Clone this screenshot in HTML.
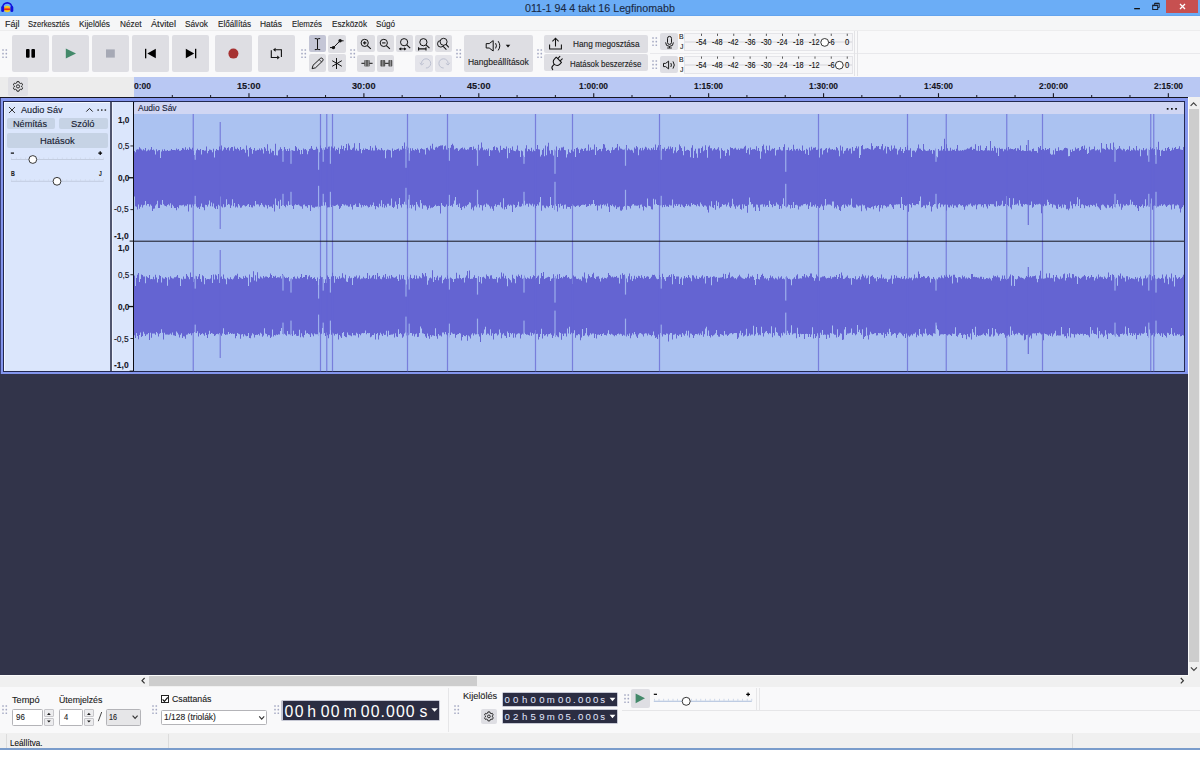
<!DOCTYPE html>
<html lang="hu">
<head>
<meta charset="utf-8">
<title>011-1 94 4 takt 16 Legfinomabb</title>
<style>
html,body{margin:0;padding:0;}
body{width:1200px;height:759px;overflow:hidden;background:#fff;position:relative;
 font-family:"Liberation Sans",sans-serif;color:#1a1a1a;font-size:9px;}
.abs{position:absolute;}
.t{position:absolute;white-space:nowrap;line-height:1.15;-webkit-text-stroke:.12px currentColor;}
.btn{position:absolute;background:#dedee3;border-radius:2px;}
svg{overflow:visible;}
</style>
</head>
<body>
<!-- s_title -->
<div class="abs" style="left:0px;top:0px;width:1200px;height:16px;background:#6badf6;"></div>
<div class="abs" style="left:0px;top:15px;width:1200px;height:1px;background:#63a4ee;"></div>
<svg class="abs" style="left:0;top:0" width="16" height="16" viewBox="0 0 16 16">
 <circle cx="7.2" cy="9" r="3.2" fill="#f7d21a"/>
 <rect x="4" y="7.6" width="6.4" height="3" fill="#f59a1a"/>
 <rect x="3.9" y="8.5" width="6.6" height="1.5" rx=".7" fill="#ee2418"/>
 <circle cx="7.2" cy="9" r="3.2" fill="none" stroke="#6badf6" stroke-width=".1"/>
 <path d="M2.7 8.6V7.4a4.55 4.55 0 0 1 9.1 0v1.2" fill="none" stroke="#1212dc" stroke-width="1.6"/>
 <rect x="1.2" y="6" width="2.9" height="6.1" rx="1.4" fill="#1212dc"/>
 <rect x="10.4" y="6" width="2.9" height="6.1" rx="1.4" fill="#1212dc"/>
</svg>
<div class="t" style="left:525.00px;top:2.20px;font-size:11.4px;color:#1a2a44;transform:scaleX(0.9368);transform-origin:0 0;">011-1 94 4 takt 16 Legfinomabb</div>
<div class="abs" style="left:1166px;top:0px;width:32px;height:13px;background:#c75050;"></div>
<svg class="abs" style="left:1130px;top:0" width="70" height="16" viewBox="0 0 70 16">
 <rect x="4.2" y="8" width="5.7" height="1.3" fill="#111"/>
 <rect x="22.7" y="5.2" width="5" height="4.3" fill="none" stroke="#1a1f2a" stroke-width="1"/><rect x="22.7" y="4.9" width="5" height="1.2" fill="#1a1f2a"/>
 <path d="M24.6 4.8V3.3h4.6v4.3h-1.4" fill="none" stroke="#1a1f2a" stroke-width="1"/><rect x="24.6" y="2.9" width="4.6" height="1.1" fill="#1a1f2a"/>
 <path d="M50 4l5 5M55 4l-5 5" stroke="#fff" stroke-width="1.3" fill="none"/>
</svg>
<div class="abs" style="left:0px;top:16px;width:1200px;height:14px;background:#f5f6f7;"></div>
<div class="t" style="left:5.00px;top:18.90px;font-size:9.3px;color:#1c1c1c;transform:scaleX(0.9677);transform-origin:0 0;">Fájl</div>
<div class="t" style="left:28.00px;top:18.90px;font-size:9.3px;color:#1c1c1c;transform:scaleX(0.8194);transform-origin:0 0;">Szerkesztés</div>
<div class="t" style="left:79.00px;top:18.90px;font-size:9.3px;color:#1c1c1c;transform:scaleX(0.8951);transform-origin:0 0;">Kijelölés</div>
<div class="t" style="left:120.00px;top:18.90px;font-size:9.3px;color:#1c1c1c;transform:scaleX(0.8850);transform-origin:0 0;">Nézet</div>
<div class="t" style="left:151.00px;top:18.90px;font-size:9.3px;color:#1c1c1c;transform:scaleX(0.9872);transform-origin:0 0;">Átvitel</div>
<div class="t" style="left:185.00px;top:18.90px;font-size:9.3px;color:#1c1c1c;transform:scaleX(0.8899);transform-origin:0 0;">Sávok</div>
<div class="t" style="left:218.00px;top:18.90px;font-size:9.3px;color:#1c1c1c;transform:scaleX(0.8745);transform-origin:0 0;">Előállítás</div>
<div class="t" style="left:260.00px;top:18.90px;font-size:9.3px;color:#1c1c1c;transform:scaleX(0.9056);transform-origin:0 0;">Hatás</div>
<div class="t" style="left:292.00px;top:18.90px;font-size:9.3px;color:#1c1c1c;transform:scaleX(0.8413);transform-origin:0 0;">Elemzés</div>
<div class="t" style="left:332.00px;top:18.90px;font-size:9.3px;color:#1c1c1c;transform:scaleX(0.8795);transform-origin:0 0;">Eszközök</div>
<div class="t" style="left:376.00px;top:18.90px;font-size:9.3px;color:#1c1c1c;transform:scaleX(0.8748);transform-origin:0 0;">Súgó</div>
<!-- s_toolbar -->
<div class="abs" style="left:0px;top:30px;width:1200px;height:47px;background:#f9f9fa;"></div>
<div class="abs" style="left:0px;top:29.5px;width:1200px;height:1px;background:#ededee;"></div>
<div class="abs" style="left:650px;top:53px;width:550px;height:1px;background:#e9e9ec;"></div>
<div class="abs" style="left:853.5px;top:31px;width:1px;height:45px;background:#e3e3e6;"></div>
<div class="abs" style="left:856.8px;top:31px;width:1px;height:45px;background:#e3e3e6;"></div>
<svg class="abs" style="left:2.2px;top:48.5px" width="6" height="11.8" viewBox="0 0 6 11.8"><rect x="0.2" y="0.2" width="1.6" height="1.6" rx=".4" fill="#a4a8c2"/><rect x="3.5" y="0.2" width="1.6" height="1.6" rx=".4" fill="#a4a8c2"/><rect x="0.2" y="3.8" width="1.6" height="1.6" rx=".4" fill="#a4a8c2"/><rect x="3.5" y="3.8" width="1.6" height="1.6" rx=".4" fill="#a4a8c2"/><rect x="0.2" y="7.4" width="1.6" height="1.6" rx=".4" fill="#a4a8c2"/><rect x="3.5" y="7.4" width="1.6" height="1.6" rx=".4" fill="#a4a8c2"/></svg>
<div class="btn" style="left:12px;top:35px;width:37px;height:37px;background:#dedee3;border-radius:2px"></div>
<div class="btn" style="left:52px;top:35px;width:37px;height:37px;background:#dedee3;border-radius:2px"></div>
<div class="btn" style="left:92px;top:35px;width:37px;height:37px;background:#dedee3;border-radius:2px"></div>
<div class="btn" style="left:132px;top:35px;width:37px;height:37px;background:#dedee3;border-radius:2px"></div>
<div class="btn" style="left:172px;top:35px;width:37px;height:37px;background:#dedee3;border-radius:2px"></div>
<div class="btn" style="left:215px;top:35px;width:37px;height:37px;background:#dedee3;border-radius:2px"></div>
<div class="btn" style="left:258px;top:35px;width:37px;height:37px;background:#dedee3;border-radius:2px"></div>
<svg class="abs" style="left:0px;top:0px" width="300" height="80" viewBox="0 0 300 80"><rect x="26" y="49" width="3.6" height="8.8" rx="1" fill="#000"/><rect x="31.4" y="49" width="3.6" height="8.8" rx="1" fill="#000"/><path d="M65.8 48.4L76 53.5L65.8 58.6Z" fill="#43896a"/><rect x="106" y="49.4" width="8.8" height="8.2" fill="#a6a9b5"/><rect x="145" y="48.8" width="1.3" height="9.5" fill="#000"/><path d="M147.3 53.5L155.8 48.8V58.3Z" fill="#000"/><rect x="195" y="48.8" width="1.3" height="9.5" fill="#000"/><path d="M194.2 53.5L185.8 48.8V58.3Z" fill="#000"/><circle cx="233.4" cy="53.6" r="5" fill="#a63232"/><g fill="none" stroke="#111" stroke-width="1.1" stroke-linejoin="miter"><path d="M281.4 56.9V49.7H275.2"/><path d="M271.3 50.2V57.5H277.6"/></g><path d="M273 49.7l2.6-2v4z M279.8 57.5l-2.6-2v4z" fill="#111"/></svg>
<svg class="abs" style="left:301.2px;top:48.5px" width="6" height="11.8" viewBox="0 0 6 11.8"><rect x="0.2" y="0.2" width="1.6" height="1.6" rx=".4" fill="#a4a8c2"/><rect x="3.5" y="0.2" width="1.6" height="1.6" rx=".4" fill="#a4a8c2"/><rect x="0.2" y="3.8" width="1.6" height="1.6" rx=".4" fill="#a4a8c2"/><rect x="3.5" y="3.8" width="1.6" height="1.6" rx=".4" fill="#a4a8c2"/><rect x="0.2" y="7.4" width="1.6" height="1.6" rx=".4" fill="#a4a8c2"/><rect x="3.5" y="7.4" width="1.6" height="1.6" rx=".4" fill="#a4a8c2"/></svg>
<div class="btn" style="left:308.7px;top:35px;width:17.4px;height:17.4px;background:#c4c6d6;border-radius:2px"></div>
<div class="btn" style="left:328px;top:35px;width:17.6px;height:17.6px;background:#dedee3;border-radius:2px"></div>
<div class="btn" style="left:308.7px;top:54.2px;width:17.6px;height:17.6px;background:#dedee3;border-radius:2px"></div>
<div class="btn" style="left:328px;top:54.2px;width:17.6px;height:17.6px;background:#dedee3;border-radius:2px"></div>
<svg class="abs" style="left:0px;top:0px" width="360" height="80" viewBox="0 0 360 80"><path d="M317.5 38.8V49.4M314.8 38.6h1.4q1.3 0 1.3 1.2 0-1.2 1.3-1.2h1.4M314.8 49.6h1.4q1.3 0 1.3-1.2 0 1.2 1.3 1.2h1.4" fill="none" stroke="#111" stroke-width="1"/><path d="M330 47.6h3.4L340.1 40.8h3.5" fill="none" stroke="#111" stroke-width="1"/><circle cx="333.4" cy="47.6" r="1.7" fill="#111"/><circle cx="340.1" cy="40.8" r="1.7" fill="#111"/><path d="M312.1 68.7l.9-3.4 7.4-6.9q1.2-.8 2.2.2t.2 2.2l-7.3 7z" fill="none" stroke="#111" stroke-width=".95" stroke-linejoin="round"/><path d="M319.2 59.6l2.5 2.5" stroke="#111" stroke-width=".8"/><path d="M336.5 58v11M332.2 60.7l9.6 5.6M341.8 60.7l-9.6 5.6" stroke="#111" stroke-width="1"/></svg>
<svg class="abs" style="left:350.2px;top:48.5px" width="6" height="11.8" viewBox="0 0 6 11.8"><rect x="0.2" y="0.2" width="1.6" height="1.6" rx=".4" fill="#a4a8c2"/><rect x="3.5" y="0.2" width="1.6" height="1.6" rx=".4" fill="#a4a8c2"/><rect x="0.2" y="3.8" width="1.6" height="1.6" rx=".4" fill="#a4a8c2"/><rect x="3.5" y="3.8" width="1.6" height="1.6" rx=".4" fill="#a4a8c2"/><rect x="0.2" y="7.4" width="1.6" height="1.6" rx=".4" fill="#a4a8c2"/><rect x="3.5" y="7.4" width="1.6" height="1.6" rx=".4" fill="#a4a8c2"/></svg>
<div class="btn" style="left:357.3px;top:35.2px;width:17.3px;height:17.2px;background:#dedee3;border-radius:2px"></div>
<div class="btn" style="left:376.6px;top:35.2px;width:17.3px;height:17.2px;background:#dedee3;border-radius:2px"></div>
<div class="btn" style="left:396px;top:35.2px;width:17.3px;height:17.2px;background:#dedee3;border-radius:2px"></div>
<div class="btn" style="left:415.3px;top:35.2px;width:17.3px;height:17.2px;background:#dedee3;border-radius:2px"></div>
<div class="btn" style="left:434.5px;top:35.2px;width:17.3px;height:17.2px;background:#dedee3;border-radius:2px"></div>
<div class="btn" style="left:357.3px;top:54.5px;width:17.3px;height:17.1px;background:#dedee3;border-radius:2px"></div>
<div class="btn" style="left:376.6px;top:54.5px;width:17.3px;height:17.1px;background:#dedee3;border-radius:2px"></div>
<div class="btn" style="left:415.3px;top:54.5px;width:17.3px;height:17.1px;background:#e4e4ea;border-radius:2px"></div>
<div class="btn" style="left:434.5px;top:54.5px;width:17.3px;height:17.1px;background:#e4e4ea;border-radius:2px"></div>
<svg class="abs" style="left:0px;top:0px" width="470" height="80" viewBox="0 0 470 80"><circle cx="364.7" cy="42.9" r="3.6" stroke="#111" fill="none" stroke-width="1"/><path d="M367.3 45.6l3.5 3.3" stroke="#111" fill="none" stroke-width="1.1"/><path d="M363 42.9h3.4M364.7 41.2v3.4" stroke="#111" fill="none" stroke-width="1.1"/><circle cx="383.8" cy="42.9" r="3.6" stroke="#111" fill="none" stroke-width="1"/><path d="M386.4 45.6l3.5 3.3" stroke="#111" fill="none" stroke-width="1.1"/><path d="M382.1 42.9h3.4" stroke="#111" fill="none" stroke-width="1.1"/><circle cx="404.1" cy="42.2" r="3.6" stroke="#111" fill="none" stroke-width="1"/><path d="M406.7 44.9l3.5 3.3" stroke="#111" fill="none" stroke-width="1.1"/><path d="M399.6 48.9h6" stroke="#111" fill="none" stroke-width="1"/><path d="M398.8 48.9l2.4-1.7v3.4zM406.4 48.9l-2.4-1.7v3.4z" fill="#111"/><circle cx="423.4" cy="42.2" r="3.6" stroke="#111" fill="none" stroke-width="1"/><path d="M426 44.9l3.5 3.3" stroke="#111" fill="none" stroke-width="1.1"/><path d="M418.6 48.9h7.4M418.6 47.2v3.4M426 47.2v3.4" stroke="#111" fill="none" stroke-width="1.1"/><circle cx="440.8" cy="43.8" r="3.3" stroke="#111" fill="none" stroke-width=".95"/><circle cx="443.6" cy="41.8" r="3.5" stroke="#111" fill="#dedee3" stroke-width=".95"/><path d="M446.1 44.4l2.7 2.9M443.2 46.3l3.2 3.3" stroke="#111" fill="none" stroke-width="1.05"/><path d="M361.4 63.3h11.2" stroke="#111" fill="none" stroke-width="1"/><rect x="364.3" y="60" width="5.4" height="6.6" rx=".8" fill="#555"/><path d="M365.7 60v6.6M368.3 60v6.6" stroke="#dedee3" stroke-width=".5"/><path d="M385 63.3h4" stroke="#111" fill="none" stroke-width="1"/><rect x="380.4" y="60" width="4.8" height="6.6" rx=".8" fill="#555"/><rect x="388.4" y="60" width="3.9" height="6.6" rx=".8" fill="#555"/><path d="M382.8 60v6.6M390.4 60v6.6" stroke="#dedee3" stroke-width=".5"/><path d="M421.5 63.6a4.6 4.6 0 1 1 4.4 4.4" stroke="#bcc0d0" fill="none" stroke-width="1"/><path d="M419.9 62.8l1.6 2.2 2.2-1.6" stroke="#bcc0d0" fill="none" stroke-width="1"/><path d="M448.1 63.6a4.6 4.6 0 1 0 -4.4 4.4" stroke="#bcc0d0" fill="none" stroke-width="1"/><path d="M449.7 62.8l-1.6 2.2-2.2-1.6" stroke="#bcc0d0" fill="none" stroke-width="1"/></svg>
<svg class="abs" style="left:456.3px;top:48.5px" width="6" height="11.8" viewBox="0 0 6 11.8"><rect x="0.2" y="0.2" width="1.6" height="1.6" rx=".4" fill="#a4a8c2"/><rect x="3.5" y="0.2" width="1.6" height="1.6" rx=".4" fill="#a4a8c2"/><rect x="0.2" y="3.8" width="1.6" height="1.6" rx=".4" fill="#a4a8c2"/><rect x="3.5" y="3.8" width="1.6" height="1.6" rx=".4" fill="#a4a8c2"/><rect x="0.2" y="7.4" width="1.6" height="1.6" rx=".4" fill="#a4a8c2"/><rect x="3.5" y="7.4" width="1.6" height="1.6" rx=".4" fill="#a4a8c2"/></svg>
<div class="btn" style="left:463.8px;top:35px;width:69.2px;height:37px;background:#dedee3;border-radius:2px"></div>
<svg class="abs" style="left:0px;top:0px" width="540" height="80" viewBox="0 0 540 80"><path d="M486.2 43.6h3l4-3v10.4l-4-3h-3z" fill="none" stroke="#111" stroke-width="1" stroke-linejoin="round"/><path d="M495.6 43.2q1.7 2.6 0 5.2M498.2 41.2q3.2 4.6 0 9.2" fill="none" stroke="#111" stroke-width="1"/><path d="M505.7 44.8l2.3 2.8 2.3-2.8z" fill="#111"/></svg>
<div class="t" style="left:468.00px;top:56.60px;font-size:9.3px;color:#1c1c1c;transform:scaleX(0.9117);transform-origin:0 0;">Hangbeállítások</div>
<svg class="abs" style="left:537.3px;top:48.5px" width="6" height="11.8" viewBox="0 0 6 11.8"><rect x="0.2" y="0.2" width="1.6" height="1.6" rx=".4" fill="#a4a8c2"/><rect x="3.5" y="0.2" width="1.6" height="1.6" rx=".4" fill="#a4a8c2"/><rect x="0.2" y="3.8" width="1.6" height="1.6" rx=".4" fill="#a4a8c2"/><rect x="3.5" y="3.8" width="1.6" height="1.6" rx=".4" fill="#a4a8c2"/><rect x="0.2" y="7.4" width="1.6" height="1.6" rx=".4" fill="#a4a8c2"/><rect x="3.5" y="7.4" width="1.6" height="1.6" rx=".4" fill="#a4a8c2"/></svg>
<div class="btn" style="left:544.3px;top:35.4px;width:104px;height:17.2px;background:#dedee3;border-radius:2px"></div>
<div class="btn" style="left:544.3px;top:54.2px;width:104px;height:17.2px;background:#dedee3;border-radius:2px"></div>
<svg class="abs" style="left:0px;top:0px" width="660" height="80" viewBox="0 0 660 80"><path d="M549.6 44.6v4.4h11.8v-4.4" fill="none" stroke="#111" stroke-width="1.05"/><path d="M555.5 46.4v-8M552.4 41.3l3.1-3.1 3.1 3.1" fill="none" stroke="#111" stroke-width="1.05"/><g transform="translate(556.4,62.3) rotate(45)" fill="none" stroke="#111" stroke-width="1.05" stroke-linejoin="round" stroke-linecap="round"><path d="M-1.7-6.6v3M1.7-6.6v3"/><path d="M-3.7-3.5h7.4v2.6q0 3.2-3.7 3.9-3.7-.7-3.7-3.9z"/><path d="M0 3v2.2q0 2.4 2.6 2.6"/></g></svg>
<div class="t" style="left:572.50px;top:39.40px;font-size:9.4px;color:#1c1c1c;transform:scaleX(0.8804);transform-origin:0 0;">Hang megosztása</div>
<div class="t" style="left:569.70px;top:58.70px;font-size:9.4px;color:#1c1c1c;transform:scaleX(0.8396);transform-origin:0 0;">Hatások beszerzése</div>
<svg class="abs" style="left:652.4px;top:36.9px" width="6" height="11.8" viewBox="0 0 6 11.8"><rect x="0.2" y="0.2" width="1.6" height="1.6" rx=".4" fill="#a4a8c2"/><rect x="3.5" y="0.2" width="1.6" height="1.6" rx=".4" fill="#a4a8c2"/><rect x="0.2" y="3.8" width="1.6" height="1.6" rx=".4" fill="#a4a8c2"/><rect x="3.5" y="3.8" width="1.6" height="1.6" rx=".4" fill="#a4a8c2"/><rect x="0.2" y="7.4" width="1.6" height="1.6" rx=".4" fill="#a4a8c2"/><rect x="3.5" y="7.4" width="1.6" height="1.6" rx=".4" fill="#a4a8c2"/></svg>
<div class="btn" style="left:660px;top:33.2px;width:17.6px;height:17.2px;background:#dedee3;border-radius:2px"></div>
<div class="abs" style="left:684.4px;top:33.2px;width:168.2px;height:8.4px;background:#f5f5f7;border:1px solid #e4e4e8;box-sizing:border-box;"></div>
<div class="abs" style="left:684.4px;top:41.800000000000004px;width:168.2px;height:9.2px;background:#f5f5f7;border:1px solid #e4e4e8;box-sizing:border-box;"></div>
<div class="t" style="left:679.40px;top:32.60px;font-size:7.7px;color:#1c1c1c;transform:scaleX(0.8956);transform-origin:0 0;">B</div>
<div class="t" style="left:679.60px;top:42.60px;font-size:7.7px;color:#1c1c1c;transform:scaleX(0.8831);transform-origin:0 0;">J</div>
<div class="t" style="left:695.95px;top:36.60px;font-size:8.8px;color:#111;transform:scaleX(0.8256);transform-origin:0 0;">-54</div>
<div class="t" style="left:712.05px;top:36.60px;font-size:8.8px;color:#111;transform:scaleX(0.8256);transform-origin:0 0;">-48</div>
<div class="t" style="left:728.25px;top:36.60px;font-size:8.8px;color:#111;transform:scaleX(0.8256);transform-origin:0 0;">-42</div>
<div class="t" style="left:744.55px;top:36.60px;font-size:8.8px;color:#111;transform:scaleX(0.8256);transform-origin:0 0;">-36</div>
<div class="t" style="left:760.75px;top:36.60px;font-size:8.8px;color:#111;transform:scaleX(0.8256);transform-origin:0 0;">-30</div>
<div class="t" style="left:776.95px;top:36.60px;font-size:8.8px;color:#111;transform:scaleX(0.8256);transform-origin:0 0;">-24</div>
<div class="t" style="left:793.15px;top:36.60px;font-size:8.8px;color:#111;transform:scaleX(0.8256);transform-origin:0 0;">-18</div>
<div class="t" style="left:809.45px;top:36.60px;font-size:8.8px;color:#111;transform:scaleX(0.8256);transform-origin:0 0;">-12</div>
<div class="t" style="left:827.60px;top:36.60px;font-size:8.8px;color:#111;transform:scaleX(0.8436);transform-origin:0 0;">-6</div>
<div class="t" style="left:844.80px;top:36.60px;font-size:8.8px;color:#111;transform:scaleX(0.8583);transform-origin:0 0;">0</div>
<svg class="abs" style="left:0px;top:0px" width="860" height="80" viewBox="0 0 860 80"><rect x="701.1" y="33.7" width=".8" height="2.2" fill="#333"/><rect x="717.2" y="33.7" width=".8" height="2.2" fill="#333"/><rect x="733.4" y="33.7" width=".8" height="2.2" fill="#333"/><rect x="749.7" y="33.7" width=".8" height="2.2" fill="#333"/><rect x="765.9" y="33.7" width=".8" height="2.2" fill="#333"/><rect x="782.1" y="33.7" width=".8" height="2.2" fill="#333"/><rect x="798.3000000000001" y="33.7" width=".8" height="2.2" fill="#333"/><rect x="814.6" y="33.7" width=".8" height="2.2" fill="#333"/><rect x="830.8000000000001" y="33.7" width=".8" height="2.2" fill="#333"/><rect x="846.8000000000001" y="33.7" width=".8" height="2.2" fill="#333"/><circle cx="824.7" cy="42.4" r="3.9" fill="#fff" stroke="#222" stroke-width=".9"/><rect x="667.5" y="36.4" width="4" height="8" rx="2" fill="none" stroke="#111" stroke-width=".95"/><path d="M665.6 42.4q0 4 3.9 4t3.9-4M669.5 46.4v1.5M667.2 48h4.6" fill="none" stroke="#111" stroke-width=".95"/></svg>
<svg class="abs" style="left:652.4px;top:60.4px" width="6" height="11.8" viewBox="0 0 6 11.8"><rect x="0.2" y="0.2" width="1.6" height="1.6" rx=".4" fill="#a4a8c2"/><rect x="3.5" y="0.2" width="1.6" height="1.6" rx=".4" fill="#a4a8c2"/><rect x="0.2" y="3.8" width="1.6" height="1.6" rx=".4" fill="#a4a8c2"/><rect x="3.5" y="3.8" width="1.6" height="1.6" rx=".4" fill="#a4a8c2"/><rect x="0.2" y="7.4" width="1.6" height="1.6" rx=".4" fill="#a4a8c2"/><rect x="3.5" y="7.4" width="1.6" height="1.6" rx=".4" fill="#a4a8c2"/></svg>
<div class="btn" style="left:660px;top:56.2px;width:17.6px;height:17.2px;background:#dedee3;border-radius:2px"></div>
<div class="abs" style="left:684.4px;top:56.2px;width:168.2px;height:8.4px;background:#f5f5f7;border:1px solid #e4e4e8;box-sizing:border-box;"></div>
<div class="abs" style="left:684.4px;top:64.8px;width:168.2px;height:9.2px;background:#f5f5f7;border:1px solid #e4e4e8;box-sizing:border-box;"></div>
<div class="t" style="left:679.40px;top:55.60px;font-size:7.7px;color:#1c1c1c;transform:scaleX(0.8956);transform-origin:0 0;">B</div>
<div class="t" style="left:679.60px;top:65.60px;font-size:7.7px;color:#1c1c1c;transform:scaleX(0.8831);transform-origin:0 0;">J</div>
<div class="t" style="left:695.95px;top:59.60px;font-size:8.8px;color:#111;transform:scaleX(0.8256);transform-origin:0 0;">-54</div>
<div class="t" style="left:712.05px;top:59.60px;font-size:8.8px;color:#111;transform:scaleX(0.8256);transform-origin:0 0;">-48</div>
<div class="t" style="left:728.25px;top:59.60px;font-size:8.8px;color:#111;transform:scaleX(0.8256);transform-origin:0 0;">-42</div>
<div class="t" style="left:744.55px;top:59.60px;font-size:8.8px;color:#111;transform:scaleX(0.8256);transform-origin:0 0;">-36</div>
<div class="t" style="left:760.75px;top:59.60px;font-size:8.8px;color:#111;transform:scaleX(0.8256);transform-origin:0 0;">-30</div>
<div class="t" style="left:776.95px;top:59.60px;font-size:8.8px;color:#111;transform:scaleX(0.8256);transform-origin:0 0;">-24</div>
<div class="t" style="left:793.15px;top:59.60px;font-size:8.8px;color:#111;transform:scaleX(0.8256);transform-origin:0 0;">-18</div>
<div class="t" style="left:809.45px;top:59.60px;font-size:8.8px;color:#111;transform:scaleX(0.8256);transform-origin:0 0;">-12</div>
<div class="t" style="left:827.60px;top:59.60px;font-size:8.8px;color:#111;transform:scaleX(0.8436);transform-origin:0 0;">-6</div>
<div class="t" style="left:844.80px;top:59.60px;font-size:8.8px;color:#111;transform:scaleX(0.8583);transform-origin:0 0;">0</div>
<svg class="abs" style="left:0px;top:0px" width="860" height="80" viewBox="0 0 860 80"><rect x="701.1" y="56.5" width=".8" height="2.2" fill="#333"/><rect x="717.2" y="56.5" width=".8" height="2.2" fill="#333"/><rect x="733.4" y="56.5" width=".8" height="2.2" fill="#333"/><rect x="749.7" y="56.5" width=".8" height="2.2" fill="#333"/><rect x="765.9" y="56.5" width=".8" height="2.2" fill="#333"/><rect x="782.1" y="56.5" width=".8" height="2.2" fill="#333"/><rect x="798.3000000000001" y="56.5" width=".8" height="2.2" fill="#333"/><rect x="814.6" y="56.5" width=".8" height="2.2" fill="#333"/><rect x="830.8000000000001" y="56.5" width=".8" height="2.2" fill="#333"/><rect x="846.8000000000001" y="56.5" width=".8" height="2.2" fill="#333"/><circle cx="839.3" cy="65.2" r="3.9" fill="#fff" stroke="#222" stroke-width=".9"/><path d="M663.5 63.4h2.1l3-2.3v7.8l-3-2.3h-2.1z" fill="none" stroke="#111" stroke-width=".95" stroke-linejoin="round"/><path d="M670.8 63q1.3 2 0 4M673 61.4q2.6 3.6 0 7.2" fill="none" stroke="#111" stroke-width=".95"/></svg>
<!-- s_track -->
<div class="abs" style="left:0px;top:77px;width:1200px;height:20px;background:#ececec;"></div>
<div class="abs" style="left:134px;top:77px;width:1066px;height:20px;background:#b9c8f3;"></div>
<div class="abs" style="left:8.3px;top:76.8px;width:19.4px;height:18.8px;background:#e0e0e5;border-radius:2px;"></div>
<svg class="abs" style="left:0;top:0" width="40" height="100" viewBox="0 0 40 100"><path d="M16.64 82.96L16.98 81.61L19.02 81.61L19.36 82.96L20.30 83.50L21.64 83.12L22.66 84.89L21.66 85.86L21.66 86.94L22.66 87.91L21.64 89.68L20.30 89.30L19.36 89.84L19.02 91.19L16.98 91.19L16.64 89.84L15.70 89.30L14.36 89.68L13.34 87.91L14.34 86.94L14.34 85.86L13.34 84.89L14.36 83.12L15.70 83.50Z" fill="none" stroke="#222" stroke-width="0.95" stroke-linejoin="round"/><circle cx="18" cy="86.4" r="1.6" fill="none" stroke="#222" stroke-width="0.95"/></svg>
<div class="t" style="left:134.30px;top:80.60px;font-size:9.1px;color:#15151f;font-weight:bold;transform:scaleX(0.9335);transform-origin:0 0;">0:00</div>
<div class="t" style="left:237.17px;top:80.60px;font-size:9.1px;color:#15151f;font-weight:bold;transform:scaleX(1.0098);transform-origin:0 0;">15:00</div>
<div class="t" style="left:352.09px;top:80.60px;font-size:9.1px;color:#15151f;font-weight:bold;transform:scaleX(1.0098);transform-origin:0 0;">30:00</div>
<div class="t" style="left:467.01px;top:80.60px;font-size:9.1px;color:#15151f;font-weight:bold;transform:scaleX(1.0098);transform-origin:0 0;">45:00</div>
<div class="t" style="left:579.18px;top:80.60px;font-size:9.1px;color:#15151f;font-weight:bold;transform:scaleX(0.9247);transform-origin:0 0;">1:00:00</div>
<div class="t" style="left:694.10px;top:80.60px;font-size:9.1px;color:#15151f;font-weight:bold;transform:scaleX(0.9247);transform-origin:0 0;">1:15:00</div>
<div class="t" style="left:809.02px;top:80.60px;font-size:9.1px;color:#15151f;font-weight:bold;transform:scaleX(0.9247);transform-origin:0 0;">1:30:00</div>
<div class="t" style="left:923.94px;top:80.60px;font-size:9.1px;color:#15151f;font-weight:bold;transform:scaleX(0.9247);transform-origin:0 0;">1:45:00</div>
<div class="t" style="left:1038.86px;top:80.60px;font-size:9.1px;color:#15151f;font-weight:bold;transform:scaleX(0.9247);transform-origin:0 0;">2:00:00</div>
<div class="t" style="left:1153.78px;top:80.60px;font-size:9.1px;color:#15151f;font-weight:bold;transform:scaleX(0.9247);transform-origin:0 0;">2:15:00</div>
<svg class="abs" style="left:0;top:0" width="1200" height="100" viewBox="0 0 1200 100"><rect x="248.42000000000002" y="93.2" width="1.1" height="4" fill="#1a1a26"/><rect x="363.34000000000003" y="93.2" width="1.1" height="4" fill="#1a1a26"/><rect x="478.26" y="93.2" width="1.1" height="4" fill="#1a1a26"/><rect x="593.1800000000001" y="93.2" width="1.1" height="4" fill="#1a1a26"/><rect x="708.1" y="93.2" width="1.1" height="4" fill="#1a1a26"/><rect x="823.02" y="93.2" width="1.1" height="4" fill="#1a1a26"/><rect x="937.94" y="93.2" width="1.1" height="4" fill="#1a1a26"/><rect x="1052.8600000000001" y="93.2" width="1.1" height="4" fill="#1a1a26"/><rect x="1167.78" y="93.2" width="1.1" height="4" fill="#1a1a26"/><rect x="171.81" y="95" width="1" height="2.2" fill="#1a1a26"/><rect x="210.11" y="95" width="1" height="2.2" fill="#1a1a26"/><rect x="286.73" y="95" width="1" height="2.2" fill="#1a1a26"/><rect x="325.03" y="95" width="1" height="2.2" fill="#1a1a26"/><rect x="401.65" y="95" width="1" height="2.2" fill="#1a1a26"/><rect x="439.95" y="95" width="1" height="2.2" fill="#1a1a26"/><rect x="516.57" y="95" width="1" height="2.2" fill="#1a1a26"/><rect x="554.87" y="95" width="1" height="2.2" fill="#1a1a26"/><rect x="631.49" y="95" width="1" height="2.2" fill="#1a1a26"/><rect x="669.79" y="95" width="1" height="2.2" fill="#1a1a26"/><rect x="746.41" y="95" width="1" height="2.2" fill="#1a1a26"/><rect x="784.71" y="95" width="1" height="2.2" fill="#1a1a26"/><rect x="861.33" y="95" width="1" height="2.2" fill="#1a1a26"/><rect x="899.63" y="95" width="1" height="2.2" fill="#1a1a26"/><rect x="976.25" y="95" width="1" height="2.2" fill="#1a1a26"/><rect x="1014.55" y="95" width="1" height="2.2" fill="#1a1a26"/><rect x="1091.17" y="95" width="1" height="2.2" fill="#1a1a26"/><rect x="1129.47" y="95" width="1" height="2.2" fill="#1a1a26"/></svg>
<div class="abs" style="left:0px;top:97px;width:1188px;height:578px;background:#32344a;"></div>
<div class="abs" style="left:0px;top:96.8px;width:1188px;height:1.6px;background:#15151f;"></div>
<div class="abs" style="left:0px;top:98.4px;width:1188px;height:275.8px;background:#8496ee;"></div>
<div class="abs" style="left:0px;top:98.4px;width:1px;height:275.8px;background:#3a3f78;"></div>
<div class="abs" style="left:2.9px;top:100.5px;width:1182.2px;height:271.8px;background:#232950;"></div>
<div class="abs" style="left:3.8px;top:101.8px;width:106.8px;height:269.6px;background:#dbe6fc;"></div>
<div class="abs" style="left:3.8px;top:101.8px;width:106.8px;height:0.9px;background:#f4f8ff;"></div>
<div class="abs" style="left:3.8px;top:101.8px;width:0.8px;height:269.6px;background:#f4f8ff;"></div>
<div class="abs" style="left:110.1px;top:101.8px;width:1.7px;height:269.6px;background:#50556e;"></div>
<div class="abs" style="left:111.6px;top:101.8px;width:21.6px;height:269.6px;background:#dbe6fc;"></div>
<div class="abs" style="left:111.6px;top:101.8px;width:0.8px;height:269.6px;background:#eef3ff;"></div>
<div class="abs" style="left:133px;top:101.8px;width:1.4px;height:269.6px;background:#0c0c14;"></div>
<div class="abs" style="left:134.4px;top:102.4px;width:1049.2px;height:269px;background:#abc2f1;"></div>
<div class="abs" style="left:134.4px;top:102.4px;width:1049.2px;height:11.5px;background:#d0d6f3;border-top-left-radius:3px;"></div>
<svg class="abs" style="left:0;top:100px" width="120" height="20" viewBox="0 0 120 20"><path d="M9 7l6 6M15 7l-6 6" stroke="#222" stroke-width=".9"/><path d="M86.3 11.6l3.2-3.2 3.2 3.2" fill="none" stroke="#222" stroke-width="1"/><rect x="97.4" y="9.3" width="1.5" height="1.5" fill="#333"/><rect x="101" y="9.3" width="1.5" height="1.5" fill="#333"/><rect x="104.6" y="9.3" width="1.5" height="1.5" fill="#333"/></svg>
<div class="t" style="left:20.60px;top:104.70px;font-size:9.3px;color:#151a30;transform:scaleX(0.9813);transform-origin:0 0;">Audio Sáv</div>
<div class="abs" style="left:7px;top:117.6px;width:48px;height:11.8px;background:#c6d3e5;border-radius:2px;"></div>
<div class="abs" style="left:58.8px;top:117.6px;width:48.8px;height:11.8px;background:#c6d3e5;border-radius:2px;"></div>
<div class="abs" style="left:7px;top:133.2px;width:100.6px;height:14.6px;background:#c6d3e5;border-radius:2px;"></div>
<div class="t" style="left:13.40px;top:118.60px;font-size:9.3px;color:#151a30;transform:scaleX(0.9820);transform-origin:0 0;">Némítás</div>
<div class="t" style="left:71.25px;top:118.60px;font-size:9.3px;color:#151a30;transform:scaleX(1.0102);transform-origin:0 0;">Szóló</div>
<div class="t" style="left:39.70px;top:135.60px;font-size:9.3px;color:#151a30;transform:scaleX(1.0142);transform-origin:0 0;">Hatások</div>
<svg class="abs" style="left:0;top:0" width="120" height="200" viewBox="0 0 120 200"><rect x="11" y="159.0" width="92.6" height="1" fill="#c3cde0"/><rect x="11.3" y="157.5" width=".7" height="1.6" fill="#cdd6e8"/><rect x="15.9" y="157.5" width=".7" height="1.6" fill="#cdd6e8"/><rect x="20.5" y="157.5" width=".7" height="1.6" fill="#cdd6e8"/><rect x="25.1" y="157.5" width=".7" height="1.6" fill="#cdd6e8"/><rect x="29.7" y="157.5" width=".7" height="1.6" fill="#cdd6e8"/><rect x="34.3" y="157.5" width=".7" height="1.6" fill="#cdd6e8"/><rect x="38.9" y="157.5" width=".7" height="1.6" fill="#cdd6e8"/><rect x="43.5" y="157.5" width=".7" height="1.6" fill="#cdd6e8"/><rect x="48.1" y="157.5" width=".7" height="1.6" fill="#cdd6e8"/><rect x="52.7" y="157.5" width=".7" height="1.6" fill="#cdd6e8"/><rect x="57.3" y="157.5" width=".7" height="1.6" fill="#cdd6e8"/><rect x="61.9" y="157.5" width=".7" height="1.6" fill="#cdd6e8"/><rect x="66.5" y="157.5" width=".7" height="1.6" fill="#cdd6e8"/><rect x="71.1" y="157.5" width=".7" height="1.6" fill="#cdd6e8"/><rect x="75.7" y="157.5" width=".7" height="1.6" fill="#cdd6e8"/><rect x="80.3" y="157.5" width=".7" height="1.6" fill="#cdd6e8"/><rect x="84.9" y="157.5" width=".7" height="1.6" fill="#cdd6e8"/><rect x="89.5" y="157.5" width=".7" height="1.6" fill="#cdd6e8"/><rect x="94.1" y="157.5" width=".7" height="1.6" fill="#cdd6e8"/><rect x="98.7" y="157.5" width=".7" height="1.6" fill="#cdd6e8"/><rect x="103.3" y="157.5" width=".7" height="1.6" fill="#cdd6e8"/><circle cx="32.8" cy="159.5" r="3.9" fill="#fff" stroke="#222" stroke-width=".9"/><rect x="11" y="180.8" width="92.6" height="1" fill="#c3cde0"/><rect x="11.3" y="179.3" width=".7" height="1.6" fill="#cdd6e8"/><rect x="15.9" y="179.3" width=".7" height="1.6" fill="#cdd6e8"/><rect x="20.5" y="179.3" width=".7" height="1.6" fill="#cdd6e8"/><rect x="25.1" y="179.3" width=".7" height="1.6" fill="#cdd6e8"/><rect x="29.7" y="179.3" width=".7" height="1.6" fill="#cdd6e8"/><rect x="34.3" y="179.3" width=".7" height="1.6" fill="#cdd6e8"/><rect x="38.9" y="179.3" width=".7" height="1.6" fill="#cdd6e8"/><rect x="43.5" y="179.3" width=".7" height="1.6" fill="#cdd6e8"/><rect x="48.1" y="179.3" width=".7" height="1.6" fill="#cdd6e8"/><rect x="52.7" y="179.3" width=".7" height="1.6" fill="#cdd6e8"/><rect x="57.3" y="179.3" width=".7" height="1.6" fill="#cdd6e8"/><rect x="61.9" y="179.3" width=".7" height="1.6" fill="#cdd6e8"/><rect x="66.5" y="179.3" width=".7" height="1.6" fill="#cdd6e8"/><rect x="71.1" y="179.3" width=".7" height="1.6" fill="#cdd6e8"/><rect x="75.7" y="179.3" width=".7" height="1.6" fill="#cdd6e8"/><rect x="80.3" y="179.3" width=".7" height="1.6" fill="#cdd6e8"/><rect x="84.9" y="179.3" width=".7" height="1.6" fill="#cdd6e8"/><rect x="89.5" y="179.3" width=".7" height="1.6" fill="#cdd6e8"/><rect x="94.1" y="179.3" width=".7" height="1.6" fill="#cdd6e8"/><rect x="98.7" y="179.3" width=".7" height="1.6" fill="#cdd6e8"/><rect x="103.3" y="179.3" width=".7" height="1.6" fill="#cdd6e8"/><circle cx="57" cy="181.3" r="3.9" fill="#fff" stroke="#222" stroke-width=".9"/><rect x="10.8" y="152.5" width="3.2" height="1.2" fill="#000"/><path d="M98.3 153.2h3.8M100.2 151.3v3.8" stroke="#000" stroke-width="1.2"/></svg>
<div class="t" style="left:10.80px;top:170.00px;font-size:6.6px;color:#222;font-weight:bold;transform:scaleX(0.7972);transform-origin:0 0;">B</div>
<div class="t" style="left:98.80px;top:170.00px;font-size:6.6px;color:#222;font-weight:bold;transform:scaleX(0.7629);transform-origin:0 0;">J</div>
<div class="t" style="left:117.60px;top:114.60px;font-size:9.1px;color:#15151f;font-weight:bold;transform:scaleX(0.9013);transform-origin:0 0;">1,0</div>
<div class="t" style="left:117.60px;top:141.00px;font-size:9.1px;color:#15151f;transform:scaleX(0.9013);transform-origin:0 0;">0,5</div>
<div class="t" style="left:117.60px;top:173.00px;font-size:9.1px;color:#15151f;font-weight:bold;transform:scaleX(0.9013);transform-origin:0 0;">0,0</div>
<div class="t" style="left:114.40px;top:204.00px;font-size:9.1px;color:#15151f;transform:scaleX(0.9312);transform-origin:0 0;">-0,5</div>
<div class="t" style="left:114.40px;top:230.60px;font-size:9.1px;color:#15151f;font-weight:bold;transform:scaleX(0.9312);transform-origin:0 0;">-1,0</div>
<div class="t" style="left:117.60px;top:242.80px;font-size:9.1px;color:#15151f;font-weight:bold;transform:scaleX(0.9013);transform-origin:0 0;">1,0</div>
<div class="t" style="left:117.60px;top:269.50px;font-size:9.1px;color:#15151f;transform:scaleX(0.9013);transform-origin:0 0;">0,5</div>
<div class="t" style="left:117.60px;top:301.70px;font-size:9.1px;color:#15151f;font-weight:bold;transform:scaleX(0.9013);transform-origin:0 0;">0,0</div>
<div class="t" style="left:114.40px;top:333.70px;font-size:9.1px;color:#15151f;transform:scaleX(0.9312);transform-origin:0 0;">-0,5</div>
<div class="t" style="left:114.40px;top:360.40px;font-size:9.1px;color:#15151f;font-weight:bold;transform:scaleX(0.9312);transform-origin:0 0;">-1,0</div>
<svg class="abs" style="left:0;top:0" width="140" height="380" viewBox="0 0 140 380"><rect x="130.4" y="145.5" width="2.8" height=".9" fill="#222"/><rect x="128.2" y="177.1" width="5" height="1.3" fill="#111"/><rect x="130.4" y="209.2" width="2.8" height=".9" fill="#222"/><rect x="130.4" y="274.3" width="2.8" height=".9" fill="#222"/><rect x="128.2" y="305.9" width="5" height="1.3" fill="#111"/><rect x="130.4" y="338.0" width="2.8" height=".9" fill="#222"/><rect x="129.6" y="240.6" width="3.6" height="1" fill="#111"/><rect x="129.6" y="370.6" width="3.6" height="1" fill="#111"/></svg>
<div class="t" style="left:138.00px;top:102.90px;font-size:8.8px;color:#181c38;transform:scaleX(0.9623);transform-origin:0 0;">Audio Sáv</div>
<svg class="abs" style="left:1160px;top:100px" width="30" height="14" viewBox="0 0 30 14"><rect x="6.8" y="8" width="1.7" height="1.7" fill="#111"/><rect x="11" y="8" width="1.7" height="1.7" fill="#111"/><rect x="15.2" y="8" width="1.7" height="1.7" fill="#111"/></svg>
<svg class="abs" style="left:0;top:0" width="1200" height="380" viewBox="0 0 1200 380" shape-rendering="auto">
<path fill="#6464d2" d="M134,177.8V150.9H135V152.2H136V149.8H137V149.3H138V149.4H139V147.2H140V148.4H141V149.5H142V150.6H143V149.3H144V150.3H145V148.0H146V151.2H147V150.5H148V149.5H149V150.6H150V149.6H151V146.9H152V150.1H153V149.6H154V150.5H155V154.5H156V149.2H157V151.2H158V150.3H159V149.9H160V158.1H161V151.5H162V149.5H163V150.9H164V149.3H165V150.8H166V150.7H167V150.1H168V151.1H169V150.8H170V150.6H171V148.9H172V150.1H173V150.0H174V150.0H175V150.2H176V148.6H177V149.8H178V148.9H179V150.8H180V150.8H181V150.0H182V148.1H183V148.4H184V149.8H185V147.2H186V150.1H187V148.8H188V150.1H189V147.2H190V148.8H191V149.6H192V147.7H193V150.7H194V155.0H195V153.3H196V150.2H197V148.8H198V150.1H199V150.3H200V148.9H201V154.5H202V150.1H203V149.9H204V150.7H205V150.5H206V146.5H207V153.3H208V151.1H209V149.5H210V149.7H211V150.3H212V152.3H213V148.8H214V157.6H215V150.7H216V148.9H217V150.1H218V150.3H219V146.5H220V149.5H221V145.4H222V150.7H223V149.6H224V147.3H225V147.7H226V149.7H227V148.1H228V147.3H229V150.6H230V148.2H231V147.0H232V146.9H233V150.8H234V146.5H235V148.8H236V149.3H237V147.8H238V149.0H239V150.5H240V146.9H241V149.9H242V149.3H243V148.8H244V149.7H245V152.7H246V145.5H247V149.7H248V156.4H249V148.1H250V147.2H251V149.0H252V153.8H253V149.9H254V148.0H255V150.8H256V150.4H257V149.8H258V149.9H259V148.6H260V150.2H261V148.2H262V149.5H263V153.5H264V147.1H265V148.4H266V151.1H267V144.3H268V150.8H269V153.7H270V148.8H271V152.5H272V150.7H273V150.9H274V155.3H275V143.7H276V155.2H277V155.6H278V150.5H279V149.5H280V147.3H281V148.9H282V151.0H283V150.3H284V146.9H285V149.2H286V151.1H287V149.1H288V151.1H289V148.6H290V150.8H291V150.0H292V150.3H293V150.8H294V151.1H295V146.1H296V147.3H297V150.8H298V148.8H299V150.0H300V154.2H301V150.1H302V153.9H303V148.4H304V149.5H305V149.0H306V150.2H307V154.2H308V151.3H309V149.0H310V148.4H311V146.1H312V148.8H313V150.0H314V149.9H315V149.5H316V146.7H317V148.7H318V149.5H319V152.2H320V145.4H321V148.2H322V149.7H323V148.0H324V149.8H325V147.2H326V148.5H327V148.7H328V146.8H329V146.4H330V150.6H331V146.6H332V147.4H333V148.2H334V146.4H335V150.4H336V148.9H337V150.1H338V147.7H339V153.8H340V149.0H341V145.5H342V148.9H343V146.0H344V150.6H345V148.1H346V144.0H347V150.2H348V143.6H349V145.6H350V149.6H351V150.0H352V148.6H353V147.5H354V143.3H355V150.6H356V148.8H357V150.5H358V150.7H359V143.0H360V149.0H361V153.2H362V149.9H363V148.6H364V150.0H365V148.6H366V149.0H367V149.0H368V150.1H369V149.7H370V146.1H371V150.5H372V147.8H373V150.6H374V150.5H375V145.5H376V147.8H377V150.3H378V149.3H379V149.8H380V150.2H381V148.0H382V149.8H383V150.5H384V149.9H385V158.2H386V150.5H387V149.5H388V149.7H389V150.1H390V150.5H391V157.6H392V148.6H393V151.1H394V149.7H395V150.0H396V149.6H397V149.1H398V148.4H399V150.7H400V149.6H401V149.8H402V146.1H403V148.6H404V142.5H405V149.0H406V146.5H407V149.9H408V147.7H409V153.2H410V148.2H411V150.8H412V148.2H413V149.9H414V150.4H415V149.0H416V150.0H417V148.4H418V149.7H419V152.7H420V149.0H421V148.2H422V148.9H423V149.5H424V149.6H425V154.6H426V148.0H427V147.8H428V149.6H429V150.4H430V145.7H431V148.5H432V143.8H433V149.4H434V150.0H435V147.6H436V146.7H437V147.7H438V146.5H439V146.0H440V145.5H441V145.5H442V145.2H443V149.4H444V146.2H445V145.5H446V149.6H447V149.9H448V148.0H449V148.4H450V147.7H451V145.0H452V143.8H453V145.5H454V149.4H455V148.8H456V147.9H457V148.4H458V151.1H459V149.7H460V148.7H461V147.9H462V147.5H463V149.2H464V147.7H465V149.6H466V150.1H467V149.3H468V149.4H469V147.5H470V146.9H471V146.9H472V150.1H473V146.5H474V149.1H475V148.4H476V150.2H477V148.0H478V144.8H479V150.2H480V148.6H481V142.4H482V147.4H483V150.3H484V149.4H485V150.2H486V149.1H487V150.5H488V148.6H489V156.0H490V150.1H491V150.5H492V150.3H493V147.1H494V146.3H495V150.1H496V147.2H497V147.8H498V150.6H499V152.6H500V145.8H501V150.0H502V149.7H503V147.9H504V148.4H505V149.0H506V146.6H507V158.2H508V148.3H509V153.0H510V148.2H511V150.1H512V146.4H513V150.6H514V151.1H515V151.2H516V149.6H517V145.5H518V150.4H519V150.9H520V156.9H521V150.4H522V151.2H523V155.4H524V157.1H525V148.5H526V145.2H527V151.3H528V149.0H529V149.4H530V151.1H531V147.8H532V151.6H533V149.7H534V151.0H535V151.3H536V148.9H537V144.9H538V149.3H539V149.5H540V156.5H541V154.8H542V150.1H543V148.6H544V156.2H545V145.4H546V155.3H547V146.6H548V142.7H549V150.4H550V153.8H551V150.1H552V150.3H553V155.6H554V149.6H555V150.4H556V146.5H557V157.0H558V149.9H559V148.3H560V150.6H561V147.4H562V147.4H563V146.8H564V150.1H565V150.2H566V157.4H567V154.3H568V149.3H569V152.3H570V153.1H571V149.7H572V151.1H573V151.5H574V149.0H575V156.9H576V148.0H577V147.4H578V149.3H579V152.9H580V149.8H581V148.4H582V149.1H583V150.9H584V148.8H585V147.9H586V150.8H587V150.4H588V144.6H589V150.7H590V147.4H591V150.1H592V149.6H593V149.6H594V144.6H595V155.1H596V147.1H597V150.7H598V150.1H599V149.1H600V149.1H601V151.2H602V148.7H603V143.9H604V144.6H605V147.7H606V150.9H607V150.0H608V149.7H609V150.8H610V152.9H611V150.2H612V147.3H613V150.1H614V149.4H615V148.0H616V147.5H617V143.9H618V150.2H619V146.6H620V148.5H621V148.8H622V149.6H623V149.8H624V149.6H625V148.1H626V144.9H627V150.3H628V148.5H629V149.6H630V150.3H631V149.7H632V150.6H633V152.8H634V147.6H635V148.8H636V146.0H637V147.2H638V155.3H639V149.6H640V148.1H641V150.4H642V147.8H643V150.3H644V148.7H645V146.8H646V147.5H647V149.7H648V148.2H649V149.5H650V150.3H651V147.9H652V149.6H653V147.4H654V149.9H655V144.6H656V150.0H657V147.4H658V145.2H659V150.2H660V144.9H661V150.4H662V148.7H663V148.9H664V147.5H665V150.7H666V148.9H667V148.5H668V146.4H669V149.2H670V146.5H671V148.5H672V146.9H673V153.3H674V150.5H675V147.2H676V152.5H677V150.9H678V150.1H679V144.4H680V146.2H681V147.9H682V150.9H683V155.2H684V146.4H685V150.9H686V150.2H687V149.8H688V150.0H689V150.7H690V157.3H691V147.7H692V145.2H693V157.9H694V150.7H695V148.8H696V153.6H697V157.7H698V148.5H699V148.6H700V153.0H701V148.0H702V146.4H703V151.2H704V150.3H705V145.3H706V150.1H707V157.7H708V146.7H709V145.6H710V148.2H711V148.2H712V150.5H713V149.2H714V148.0H715V149.6H716V149.8H717V148.7H718V147.2H719V150.6H720V158.4H721V148.2H722V150.1H723V151.0H724V150.4H725V156.0H726V153.1H727V149.3H728V150.1H729V155.6H730V147.3H731V148.0H732V147.9H733V149.2H734V148.6H735V147.7H736V149.6H737V149.7H738V148.4H739V150.0H740V148.6H741V148.5H742V148.7H743V148.5H744V146.7H745V145.8H746V153.1H747V149.7H748V148.3H749V154.5H750V147.4H751V150.1H752V149.3H753V149.3H754V148.9H755V149.7H756V146.3H757V150.8H758V147.9H759V151.1H760V158.7H761V151.4H762V146.1H763V144.4H764V149.5H765V153.2H766V145.8H767V149.9H768V150.6H769V145.5H770V150.8H771V149.4H772V148.5H773V148.9H774V148.0H775V155.4H776V150.2H777V149.8H778V149.7H779V147.1H780V149.5H781V150.5H782V150.5H783V147.1H784V144.2H785V150.2H786V150.1H787V150.0H788V147.4H789V150.4H790V150.0H791V149.0H792V150.8H793V144.7H794V149.3H795V150.4H796V148.9H797V148.8H798V150.5H799V148.7H800V150.1H801V151.1H802V145.5H803V150.8H804V150.0H805V153.8H806V148.8H807V149.7H808V155.0H809V147.6H810V150.6H811V146.8H812V149.5H813V147.8H814V147.8H815V147.2H816V149.9H817V149.8H818V148.7H819V157.4H820V148.7H821V148.3H822V154.6H823V150.6H824V150.0H825V148.7H826V148.1H827V152.6H828V148.7H829V147.7H830V149.6H831V149.5H832V149.0H833V149.9H834V149.5H835V150.2H836V147.1H837V148.3H838V150.4H839V156.3H840V145.4H841V150.5H842V146.8H843V153.6H844V150.9H845V150.4H846V148.4H847V147.9H848V150.5H849V148.7H850V148.5H851V153.4H852V146.9H853V150.7H854V150.7H855V148.1H856V146.2H857V148.5H858V146.6H859V158.0H860V155.0H861V146.0H862V145.0H863V149.3H864V149.3H865V148.4H866V148.5H867V148.0H868V148.4H869V149.0H870V149.5H871V143.3H872V146.1H873V149.8H874V148.4H875V147.7H876V145.9H877V146.5H878V146.0H879V149.0H880V149.3H881V146.3H882V144.1H883V150.3H884V148.5H885V146.2H886V153.5H887V146.7H888V147.1H889V149.6H890V151.1H891V145.5H892V149.6H893V148.2H894V145.5H895V148.5H896V148.8H897V154.4H898V150.5H899V149.2H900V147.3H901V151.0H902V148.9H903V153.1H904V151.1H905V147.1H906V149.8H907V145.6H908V150.3H909V150.2H910V148.3H911V156.9H912V150.7H913V150.5H914V150.7H915V152.3H916V150.5H917V148.2H918V144.4H919V148.6H920V148.7H921V150.1H922V151.0H923V144.0H924V149.6H925V150.4H926V150.9H927V150.7H928V150.6H929V149.1H930V150.5H931V150.0H932V153.8H933V149.9H934V150.5H935V148.4H936V156.2H937V157.3H938V149.1H939V150.8H940V150.5H941V146.3H942V150.6H943V149.1H944V138.7H945V150.7H946V144.3H947V148.2H948V150.8H949V150.7H950V147.8H951V150.7H952V149.4H953V150.0H954V149.6H955V151.0H956V148.8H957V145.0H958V150.5H959V150.8H960V150.2H961V150.8H962V150.0H963V150.5H964V149.8H965V149.8H966V149.3H967V148.3H968V148.8H969V148.5H970V147.3H971V146.8H972V150.0H973V148.8H974V149.1H975V144.3H976V150.4H977V150.7H978V146.0H979V151.0H980V145.6H981V149.9H982V150.2H983V150.8H984V150.3H985V148.0H986V146.0H987V150.4H988V150.3H989V150.4H990V140.9H991V150.8H992V148.1H993V150.7H994V146.2H995V147.7H996V152.7H997V148.3H998V156.0H999V147.8H1000V148.9H1001V148.7H1002V148.8H1003V151.2H1004V149.2H1005V149.5H1006V147.8H1007V150.4H1008V147.0H1009V149.3H1010V148.4H1011V148.9H1012V149.1H1013V149.5H1014V149.1H1015V148.0H1016V150.7H1017V148.3H1018V148.5H1019V150.1H1020V145.5H1021V151.0H1022V150.2H1023V150.5H1024V150.9H1025V150.9H1026V145.0H1027V151.0H1028V150.4H1029V150.6H1030V150.5H1031V151.4H1032V148.9H1033V148.4H1034V151.1H1035V150.9H1036V151.0H1037V152.8H1038V146.9H1039V148.2H1040V146.0H1041V150.0H1042V149.1H1043V149.0H1044V150.3H1045V148.0H1046V150.0H1047V149.0H1048V149.2H1049V147.9H1050V153.8H1051V154.8H1052V154.5H1053V150.3H1054V154.6H1055V148.6H1056V151.0H1057V150.9H1058V147.2H1059V150.5H1060V150.1H1061V150.3H1062V150.6H1063V149.4H1064V147.9H1065V147.8H1066V147.9H1067V148.5H1068V156.3H1069V156.1H1070V149.8H1071V152.1H1072V149.2H1073V150.9H1074V150.8H1075V147.6H1076V149.3H1077V148.4H1078V148.0H1079V150.8H1080V150.0H1081V146.8H1082V146.0H1083V148.8H1084V145.5H1085V149.9H1086V148.5H1087V154.1H1088V152.9H1089V146.8H1090V150.3H1091V149.5H1092V149.3H1093V148.9H1094V146.6H1095V150.4H1096V150.2H1097V149.3H1098V150.2H1099V149.5H1100V152.6H1101V143.1H1102V148.6H1103V148.4H1104V149.1H1105V149.8H1106V144.1H1107V147.7H1108V149.2H1109V149.5H1110V143.3H1111V149.3H1112V150.1H1113V142.6H1114V147.1H1115V148.4H1116V150.0H1117V148.9H1118V148.5H1119V146.1H1120V148.5H1121V149.6H1122V150.2H1123V148.8H1124V149.3H1125V151.3H1126V150.1H1127V149.2H1128V149.8H1129V146.2H1130V150.9H1131V149.7H1132V150.2H1133V147.9H1134V149.5H1135V150.4H1136V146.0H1137V150.2H1138V150.4H1139V148.7H1140V156.2H1141V149.8H1142V150.2H1143V148.0H1144V150.3H1145V149.5H1146V148.6H1147V155.6H1148V149.2H1149V150.0H1150V147.2H1151V149.2H1152V148.3H1153V149.7H1154V149.1H1155V155.0H1156V147.0H1157V149.4H1158V141.8H1159V150.1H1160V156.0H1161V150.5H1162V149.7H1163V150.9H1164V151.0H1165V148.1H1166V150.4H1167V148.1H1168V147.1H1169V148.9H1170V151.1H1171V150.2H1172V147.8H1173V149.7H1174V147.9H1175V147.1H1176V149.0H1177V149.0H1178V148.6H1179V146.3H1180V149.5H1181V149.7H1182V150.0H1183V146.9H1184V177.8V205.3H1183V207.0H1182V208.5H1181V212.5H1180V208.4H1179V205.3H1178V204.6H1177V205.5H1176V205.6H1175V208.7H1174V204.2H1173V204.6H1172V209.4H1171V205.2H1170V204.5H1169V204.9H1168V205.7H1167V207.0H1166V205.6H1165V204.3H1164V204.7H1163V206.0H1162V204.3H1161V205.7H1160V205.4H1159V206.4H1158V206.5H1157V207.7H1156V206.0H1155V205.6H1154V205.9H1153V209.7H1152V198.5H1151V203.6H1150V206.7H1149V206.7H1148V205.5H1147V206.4H1146V199.3H1145V206.0H1144V207.8H1143V204.6H1142V205.9H1141V207.1H1140V205.9H1139V210.9H1138V208.2H1137V205.0H1136V206.4H1135V205.0H1134V205.0H1133V201.7H1132V204.4H1131V199.8H1130V204.7H1129V205.5H1128V205.2H1127V204.1H1126V205.5H1125V205.8H1124V204.5H1123V207.4H1122V209.7H1121V203.8H1120V206.5H1119V204.2H1118V199.9H1117V203.9H1116V207.4H1115V206.9H1114V204.2H1113V208.4H1112V206.1H1111V207.2H1110V207.8H1109V205.2H1108V204.7H1107V208.2H1106V207.6H1105V206.3H1104V204.8H1103V204.5H1102V205.3H1101V209.9H1100V208.4H1099V207.3H1098V206.3H1097V203.6H1096V206.8H1095V205.2H1094V204.7H1093V205.9H1092V205.1H1091V204.7H1090V207.2H1089V205.3H1088V206.3H1087V205.9H1086V205.2H1085V208.2H1084V205.3H1083V204.3H1082V204.5H1081V208.1H1080V199.2H1079V205.9H1078V197.3H1077V204.3H1076V206.3H1075V204.1H1074V204.1H1073V208.6H1072V205.4H1071V201.4H1070V208.4H1069V210.2H1068V208.8H1067V209.2H1066V205.0H1065V204.4H1064V207.6H1063V204.4H1062V208.3H1061V206.3H1060V206.9H1059V204.5H1058V209.0H1057V208.5H1056V205.4H1055V204.7H1054V204.6H1053V207.5H1052V204.1H1051V203.8H1050V205.0H1049V202.0H1048V199.8H1047V205.5H1046V205.7H1045V204.3H1044V206.2H1043V205.4H1042V213.3H1041V204.4H1040V203.7H1039V204.2H1038V204.5H1037V204.2H1036V205.1H1035V204.0H1034V206.8H1033V207.8H1032V201.5H1031V204.9H1030V205.3H1029V204.2H1028V204.8H1027V204.2H1026V203.9H1025V204.8H1024V204.0H1023V206.8H1022V206.2H1021V203.7H1020V200.2H1019V205.4H1018V203.6H1017V204.4H1016V204.6H1015V205.0H1014V198.2H1013V204.8H1012V209.3H1011V207.4H1010V197.9H1009V206.3H1008V205.0H1007V195.9H1006V204.0H1005V206.0H1004V206.3H1003V200.7H1002V204.6H1001V205.4H1000V205.9H999V205.3H998V206.3H997V201.3H996V206.7H995V206.2H994V204.2H993V204.2H992V204.3H991V204.0H990V205.9H989V204.4H988V208.5H987V206.6H986V204.3H985V204.1H984V207.6H983V205.1H982V206.5H981V204.2H980V204.2H979V204.3H978V205.2H977V209.2H976V204.4H975V205.4H974V205.2H973V206.8H972V205.8H971V203.5H970V204.5H969V204.4H968V206.2H967V205.3H966V206.5H965V209.8H964V206.7H963V204.9H962V205.7H961V205.2H960V203.9H959V204.7H958V207.5H957V207.2H956V205.5H955V205.4H954V208.0H953V204.6H952V206.5H951V205.2H950V207.6H949V207.3H948V204.7H947V210.4H946V204.6H945V204.8H944V206.6H943V204.4H942V204.6H941V207.2H940V203.1H939V204.2H938V208.8H937V207.5H936V204.0H935V204.0H934V204.9H933V206.7H932V211.6H931V206.2H930V201.7H929V205.0H928V205.5H927V204.8H926V208.2H925V205.5H924V205.6H923V206.9H922V207.5H921V196.5H920V200.9H919V204.5H918V204.0H917V204.1H916V205.2H915V205.3H914V204.9H913V203.0H912V207.6H911V204.7H910V204.1H909V211.7H908V204.2H907V205.5H906V206.0H905V204.9H904V209.9H903V204.1H902V197.1H901V207.9H900V204.3H899V204.2H898V204.4H897V204.2H896V204.8H895V204.8H894V209.0H893V207.2H892V205.3H891V204.1H890V204.6H889V206.4H888V206.6H887V207.4H886V206.1H885V205.2H884V205.4H883V208.4H882V205.0H881V207.7H880V211.5H879V204.9H878V206.0H877V207.7H876V205.6H875V206.0H874V209.3H873V206.6H872V206.9H871V208.2H870V208.1H869V207.4H868V207.2H867V210.6H866V208.4H865V205.3H864V205.6H863V204.4H862V211.2H861V205.5H860V205.4H859V206.5H858V205.4H857V204.6H856V207.8H855V207.4H854V207.7H853V206.7H852V198.5H851V204.8H850V205.6H849V204.6H848V206.8H847V205.7H846V204.4H845V208.1H844V204.6H843V204.9H842V206.5H841V211.0H840V209.9H839V206.5H838V205.1H837V208.4H836V206.8H835V208.3H834V201.6H833V201.4H832V205.8H831V204.7H830V204.5H829V204.4H828V204.5H827V205.4H826V199.1H825V205.5H824V209.9H823V206.2H822V204.6H821V206.4H820V207.9H819V206.8H818V206.0H817V207.8H816V204.6H815V206.4H814V205.0H813V206.4H812V206.8H811V202.2H810V205.8H809V209.1H808V204.2H807V205.2H806V203.8H805V203.9H804V204.2H803V205.6H802V205.3H801V206.6H800V206.5H799V209.5H798V205.5H797V204.8H796V204.9H795V208.0H794V202.1H793V208.0H792V205.1H791V208.4H790V205.0H789V204.6H788V206.5H787V207.6H786V207.1H785V205.9H784V198.2H783V204.2H782V208.4H781V206.1H780V209.1H779V204.8H778V204.3H777V202.4H776V205.8H775V205.9H774V204.2H773V207.3H772V205.1H771V203.9H770V200.8H769V207.1H768V205.0H767V205.5H766V206.8H765V204.5H764V206.7H763V204.3H762V204.6H761V204.7H760V211.1H759V207.4H758V204.8H757V204.4H756V211.0H755V206.8H754V207.6H753V204.0H752V204.4H751V202.0H750V197.4H749V204.7H748V212.7H747V206.0H746V205.9H745V204.6H744V208.5H743V204.2H742V209.8H741V209.1H740V204.7H739V205.6H738V206.8H737V205.5H736V208.7H735V206.5H734V204.3H733V198.7H732V206.2H731V208.1H730V206.6H729V202.6H728V204.8H727V206.4H726V204.3H725V204.8H724V204.9H723V204.0H722V206.4H721V207.0H720V208.3H719V202.3H718V206.0H717V200.8H716V209.7H715V205.1H714V208.1H713V207.3H712V201.3H711V206.5H710V205.4H709V212.4H708V209.7H707V206.4H706V205.4H705V205.5H704V207.1H703V205.8H702V204.2H701V202.6H700V206.4H699V205.7H698V204.3H697V206.2H696V205.1H695V204.7H694V203.9H693V204.9H692V202.9H691V206.6H690V206.2H689V204.7H688V206.0H687V204.1H686V206.0H685V207.5H684V207.0H683V205.4H682V204.5H681V207.0H680V204.2H679V204.4H678V205.9H677V204.1H676V206.0H675V204.5H674V207.8H673V199.6H672V205.4H671V205.5H670V204.8H669V206.9H668V206.3H667V206.5H666V204.8H665V207.0H664V205.0H663V207.3H662V205.2H661V205.5H660V205.6H659V205.1H658V204.9H657V204.0H656V199.5H655V204.5H654V198.7H653V209.6H652V209.3H651V206.5H650V206.1H649V205.7H648V198.5H647V207.4H646V207.0H645V206.1H644V210.4H643V206.7H642V204.6H641V204.8H640V208.2H639V205.3H638V205.7H637V205.8H636V205.6H635V205.4H634V204.1H633V204.4H632V205.8H631V208.5H630V206.4H629V206.1H628V205.8H627V209.7H626V207.2H625V205.9H624V206.7H623V209.4H622V210.7H621V210.4H620V206.6H619V207.2H618V207.3H617V209.1H616V205.4H615V207.2H614V206.3H613V204.5H612V205.9H611V205.1H610V212.1H609V206.8H608V203.4H607V206.3H606V204.6H605V205.5H604V204.3H603V205.1H602V208.4H601V204.4H600V205.8H599V205.4H598V210.6H597V205.3H596V205.9H595V204.1H594V200.0H593V204.1H592V204.3H591V205.5H590V204.1H589V205.9H588V206.3H587V207.0H586V204.3H585V205.0H584V204.8H583V204.7H582V204.9H581V206.0H580V207.0H579V205.6H578V205.4H577V206.1H576V207.0H575V206.2H574V205.4H573V204.0H572V206.1H571V208.8H570V206.9H569V207.0H568V206.8H567V208.7H566V204.4H565V204.8H564V208.7H563V205.2H562V206.1H561V203.8H560V207.4H559V204.1H558V211.6H557V206.0H556V204.3H555V209.8H554V205.5H553V208.1H552V205.1H551V197.1H550V206.1H549V207.6H548V206.6H547V205.8H546V208.3H545V207.5H544V205.4H543V205.4H542V210.7H541V197.1H540V202.2H539V205.4H538V204.2H537V206.1H536V208.2H535V204.5H534V206.4H533V203.7H532V205.4H531V204.6H530V203.6H529V206.8H528V203.7H527V203.7H526V205.3H525V200.7H524V205.5H523V203.7H522V206.3H521V206.8H520V206.5H519V201.7H518V205.2H517V206.9H516V207.8H515V204.9H514V204.6H513V212.1H512V205.6H511V204.7H510V205.9H509V204.6H508V205.2H507V209.0H506V207.0H505V209.5H504V198.2H503V208.5H502V207.3H501V202.3H500V205.3H499V204.7H498V205.0H497V206.7H496V204.2H495V206.0H494V210.8H493V208.7H492V206.4H491V208.4H490V206.3H489V204.7H488V204.6H487V203.5H486V206.9H485V204.6H484V205.6H483V210.4H482V205.2H481V205.1H480V207.6H479V204.3H478V205.5H477V207.3H476V205.6H475V206.4H474V210.5H473V207.4H472V209.3H471V202.8H470V202.3H469V204.3H468V205.1H467V206.4H466V205.7H465V208.3H464V206.2H463V207.1H462V210.0H461V208.1H460V203.5H459V206.9H458V204.5H457V205.0H456V197.0H455V200.6H454V203.7H453V206.8H452V205.2H451V205.9H450V205.0H449V205.9H448V206.5H447V204.6H446V206.5H445V207.0H444V205.9H443V205.3H442V203.0H441V213.5H440V206.0H439V205.8H438V206.0H437V206.3H436V204.7H435V206.0H434V207.1H433V207.7H432V207.6H431V208.2H430V205.6H429V208.3H428V209.8H427V206.6H426V205.3H425V205.4H424V205.3H423V208.8H422V203.2H421V199.9H420V207.6H419V206.6H418V204.5H417V202.1H416V210.4H415V205.0H414V206.6H413V204.7H412V208.4H411V205.0H410V208.1H409V199.6H408V208.5H407V204.7H406V204.6H405V201.8H404V204.4H403V203.9H402V207.5H401V205.3H400V198.0H399V204.1H398V208.7H397V204.8H396V201.5H395V206.7H394V208.0H393V206.9H392V198.4H391V205.4H390V205.7H389V203.8H388V203.8H387V207.3H386V205.5H385V207.8H384V204.1H383V207.3H382V200.3H381V206.2H380V203.8H379V207.4H378V206.8H377V206.1H376V209.3H375V206.1H374V202.5H373V205.0H372V206.4H371V204.8H370V207.0H369V207.6H368V206.2H367V205.3H366V206.0H365V205.0H364V206.4H363V205.0H362V207.4H361V204.8H360V203.3H359V207.1H358V207.0H357V206.7H356V203.7H355V204.9H354V205.3H353V209.4H352V206.7H351V204.2H350V206.6H349V206.8H348V205.6H347V205.4H346V204.4H345V205.4H344V204.4H343V203.9H342V206.0H341V207.7H340V209.0H339V205.8H338V204.5H337V204.9H336V205.7H335V206.1H334V205.7H333V204.9H332V207.1H331V204.8H330V207.3H329V207.3H328V207.5H327V205.6H326V202.2H325V205.4H324V202.3H323V206.1H322V205.7H321V206.8H320V206.7H319V208.5H318V206.4H317V206.7H316V206.8H315V207.8H314V207.6H313V207.3H312V205.2H311V211.0H310V205.2H309V205.0H308V207.7H307V206.3H306V206.2H305V204.6H304V204.8H303V208.7H302V206.5H301V206.3H300V205.4H299V204.6H298V205.0H297V205.0H296V204.3H295V205.2H294V209.1H293V205.9H292V204.8H291V204.8H290V204.9H289V201.2H288V205.7H287V204.7H286V207.3H285V206.1H284V205.1H283V204.9H282V206.0H281V199.7H280V208.8H279V201.2H278V205.7H277V205.1H276V198.5H275V211.6H274V204.5H273V208.0H272V206.5H271V206.5H270V206.7H269V205.1H268V208.4H267V205.6H266V204.7H265V207.3H264V206.4H263V204.8H262V203.0H261V205.1H260V206.6H259V204.5H258V204.3H257V204.5H256V201.1H255V206.3H254V205.5H253V207.4H252V207.3H251V204.9H250V207.0H249V204.1H248V204.8H247V206.1H246V206.4H245V205.4H244V204.9H243V205.8H242V207.4H241V207.7H240V205.5H239V204.1H238V207.4H237V206.5H236V207.5H235V202.9H234V206.2H233V199.2H232V205.4H231V208.0H230V204.5H229V204.0H228V204.9H227V199.3H226V206.8H225V207.3H224V204.2H223V207.4H222V206.6H221V196.5H220V205.8H219V204.8H218V209.0H217V206.3H216V209.0H215V207.8H214V203.5H213V206.5H212V202.6H211V206.3H210V200.4H209V204.4H208V206.4H207V205.0H206V204.8H205V210.3H204V207.6H203V207.1H202V203.6H201V206.4H200V208.9H199V207.2H198V207.7H197V206.4H196V204.0H195V204.3H194V205.9H193V204.4H192V207.6H191V204.5H190V204.4H189V211.4H188V204.2H187V205.8H186V205.4H185V206.6H184V204.7H183V205.2H182V205.4H181V205.2H180V205.3H179V208.2H178V207.1H177V210.2H176V207.9H175V208.1H174V206.3H173V204.7H172V207.9H171V203.2H170V205.6H169V204.3H168V205.1H167V206.4H166V205.9H165V205.4H164V204.3H163V199.9H162V205.1H161V204.6H160V207.9H159V208.1H158V200.7H157V204.2H156V205.6H155V208.4H154V208.7H153V211.0H152V205.8H151V204.5H150V206.6H149V204.0H148V203.9H147V205.5H146V201.1H145V204.8H144V205.2H143V207.6H142V204.8H141V206.8H140V208.8H139V204.4H138V209.4H137V206.8H136V206.2H135V196.6H134Z"/>
<path fill="#6464d2" d="M134,306.6V275.5H135V286.1H136V278.0H137V274.8H138V272.9H139V282.1H140V279.1H141V274.4H142V275.0H143V276.6H144V276.5H145V283.2H146V276.3H147V277.2H148V278.1H149V275.1H150V279.2H151V279.0H152V279.2H153V276.8H154V279.2H155V274.8H156V277.6H157V282.4H158V279.1H159V275.3H160V275.9H161V282.4H162V277.5H163V278.4H164V278.7H165V277.1H166V277.7H167V285.7H168V277.3H169V279.4H170V276.3H171V277.8H172V278.4H173V278.4H174V277.3H175V277.3H176V276.4H177V275.1H178V277.7H179V278.0H180V286.1H181V278.8H182V279.4H183V276.5H184V278.8H185V278.8H186V273.9H187V275.7H188V277.2H189V279.3H190V272.5H191V276.9H192V277.0H193V281.9H194V278.8H195V275.7H196V276.2H197V279.1H198V276.5H199V274.0H200V278.9H201V281.7H202V275.2H203V276.3H204V284.3H205V277.9H206V279.6H207V279.1H208V279.0H209V279.2H210V278.6H211V275.1H212V282.9H213V274.6H214V279.6H215V274.6H216V275.6H217V279.3H218V274.1H219V283.0H220V277.5H221V276.5H222V278.9H223V274.4H224V278.4H225V279.3H226V284.2H227V277.7H228V278.8H229V279.3H230V277.2H231V279.0H232V279.5H233V278.6H234V276.6H235V275.3H236V275.6H237V273.7H238V279.0H239V277.1H240V277.7H241V278.5H242V279.0H243V276.3H244V278.1H245V275.7H246V277.2H247V277.8H248V286.1H249V274.4H250V282.2H251V277.1H252V277.6H253V271.3H254V280.5H255V275.3H256V281.5H257V272.2H258V278.3H259V278.7H260V276.4H261V277.6H262V278.4H263V276.0H264V277.4H265V276.5H266V276.5H267V277.1H268V277.9H269V277.1H270V273.6H271V275.1H272V277.9H273V276.1H274V276.7H275V275.7H276V278.1H277V277.3H278V277.3H279V277.5H280V276.3H281V278.6H282V273.9H283V275.3H284V276.8H285V278.1H286V277.5H287V278.0H288V277.0H289V281.2H290V278.7H291V278.2H292V279.2H293V276.9H294V276.4H295V278.6H296V278.7H297V276.5H298V278.2H299V278.6H300V277.1H301V274.1H302V277.9H303V276.9H304V277.1H305V275.0H306V274.9H307V279.2H308V276.6H309V275.3H310V277.6H311V277.0H312V279.1H313V278.1H314V277.3H315V278.9H316V281.0H317V277.5H318V285.0H319V278.9H320V276.0H321V277.3H322V276.9H323V279.1H324V282.9H325V279.3H326V282.9H327V275.5H328V276.9H329V279.1H330V278.9H331V276.4H332V272.8H333V276.0H334V282.8H335V276.2H336V278.9H337V277.5H338V279.1H339V276.3H340V278.5H341V277.7H342V273.2H343V277.4H344V278.6H345V274.8H346V281.4H347V282.1H348V278.2H349V276.2H350V278.3H351V277.8H352V285.1H353V278.1H354V276.6H355V276.8H356V275.6H357V278.4H358V277.4H359V275.6H360V279.2H361V278.5H362V278.6H363V276.7H364V278.3H365V278.5H366V277.9H367V273.0H368V279.0H369V275.4H370V278.6H371V277.5H372V275.7H373V275.1H374V278.8H375V275.1H376V279.3H377V272.9H378V276.8H379V276.1H380V278.7H381V279.2H382V277.2H383V275.3H384V277.4H385V274.0H386V278.9H387V276.4H388V278.5H389V275.7H390V278.4H391V275.0H392V276.8H393V277.4H394V277.7H395V277.3H396V276.2H397V278.9H398V280.9H399V274.6H400V279.6H401V275.3H402V278.8H403V275.1H404V279.5H405V279.9H406V284.5H407V276.6H408V279.3H409V277.4H410V274.7H411V277.9H412V278.7H413V277.9H414V275.3H415V279.0H416V275.5H417V278.5H418V278.4H419V276.2H420V277.5H421V278.3H422V273.0H423V274.4H424V276.4H425V273.1H426V276.2H427V284.8H428V280.4H429V278.3H430V277.4H431V278.6H432V270.2H433V281.9H434V277.0H435V280.1H436V277.6H437V275.7H438V280.3H439V277.4H440V277.2H441V275.6H442V283.3H443V279.9H444V278.8H445V277.6H446V278.9H447V275.4H448V278.8H449V278.3H450V277.5H451V278.2H452V279.1H453V281.9H454V279.0H455V278.7H456V272.8H457V278.2H458V278.6H459V274.7H460V278.1H461V279.2H462V277.9H463V277.8H464V282.4H465V277.6H466V275.5H467V271.1H468V278.2H469V270.4H470V278.9H471V278.7H472V278.8H473V277.2H474V275.2H475V277.9H476V278.1H477V278.7H478V276.2H479V281.9H480V277.1H481V283.6H482V277.3H483V276.7H484V277.7H485V278.7H486V274.5H487V275.9H488V276.5H489V278.7H490V275.4H491V275.3H492V278.6H493V279.1H494V278.8H495V279.0H496V277.1H497V282.5H498V278.2H499V277.2H500V278.8H501V272.5H502V276.5H503V273.5H504V278.3H505V275.8H506V278.8H507V286.3H508V278.1H509V279.3H510V280.3H511V282.4H512V274.8H513V278.3H514V278.9H515V283.2H516V275.8H517V276.8H518V274.4H519V275.9H520V277.8H521V274.7H522V278.7H523V278.3H524V275.5H525V277.7H526V278.9H527V277.4H528V278.3H529V278.7H530V276.2H531V278.7H532V277.3H533V275.3H534V276.0H535V279.2H536V278.1H537V276.5H538V275.4H539V284.1H540V278.3H541V273.1H542V276.1H543V272.0H544V279.0H545V278.3H546V277.8H547V277.3H548V276.7H549V277.1H550V280.9H551V278.8H552V278.2H553V274.2H554V277.7H555V276.0H556V278.4H557V274.4H558V278.9H559V273.9H560V277.9H561V277.1H562V278.2H563V276.5H564V277.1H565V275.7H566V274.9H567V277.8H568V277.1H569V278.4H570V278.9H571V278.5H572V284.0H573V275.6H574V276.7H575V276.6H576V278.7H577V279.1H578V278.6H579V279.5H580V279.3H581V280.8H582V276.6H583V277.6H584V272.5H585V278.4H586V282.6H587V278.5H588V274.2H589V275.9H590V277.5H591V277.1H592V274.3H593V272.8H594V278.1H595V279.1H596V276.7H597V276.6H598V276.2H599V278.7H600V281.4H601V278.3H602V277.5H603V278.9H604V277.8H605V278.1H606V278.5H607V277.2H608V273.0H609V274.9H610V275.7H611V277.3H612V276.4H613V277.4H614V276.7H615V277.1H616V276.0H617V277.7H618V277.7H619V283.6H620V274.7H621V278.7H622V273.2H623V275.0H624V274.5H625V276.2H626V278.5H627V282.2H628V276.2H629V273.4H630V279.4H631V276.2H632V281.1H633V278.7H634V275.7H635V279.3H636V276.7H637V278.0H638V275.8H639V276.3H640V278.1H641V275.3H642V277.4H643V278.7H644V276.1H645V278.1H646V276.7H647V276.2H648V276.7H649V278.9H650V278.3H651V276.8H652V274.8H653V275.1H654V274.8H655V276.6H656V278.6H657V279.2H658V278.9H659V274.9H660V277.1H661V279.2H662V273.8H663V277.1H664V279.3H665V280.9H666V277.2H667V277.0H668V276.4H669V275.0H670V277.0H671V274.3H672V284.3H673V274.2H674V275.9H675V278.9H676V276.4H677V276.4H678V276.6H679V284.0H680V278.7H681V277.2H682V284.9H683V278.5H684V276.1H685V278.2H686V277.0H687V278.0H688V274.9H689V277.2H690V278.2H691V281.3H692V275.3H693V275.4H694V277.5H695V278.7H696V275.7H697V278.8H698V278.9H699V277.2H700V278.1H701V276.4H702V275.2H703V278.5H704V276.8H705V283.5H706V275.9H707V275.9H708V277.8H709V277.8H710V276.8H711V285.2H712V277.0H713V276.2H714V276.6H715V277.4H716V277.1H717V281.8H718V277.7H719V277.7H720V277.6H721V277.6H722V276.9H723V273.8H724V278.8H725V274.0H726V278.5H727V278.1H728V274.8H729V272.4H730V277.8H731V276.8H732V276.3H733V277.3H734V278.5H735V278.1H736V279.3H737V277.6H738V276.2H739V274.8H740V276.5H741V277.6H742V278.2H743V278.7H744V279.1H745V277.8H746V278.3H747V276.8H748V273.7H749V278.3H750V276.6H751V276.8H752V275.5H753V276.9H754V279.9H755V284.9H756V279.1H757V274.0H758V279.1H759V279.5H760V277.1H761V275.1H762V273.7H763V275.9H764V278.6H765V277.8H766V279.3H767V278.3H768V280.4H769V277.9H770V275.6H771V277.6H772V276.3H773V278.2H774V279.3H775V277.8H776V278.5H777V279.4H778V276.5H779V278.6H780V277.4H781V276.3H782V279.1H783V278.6H784V279.2H785V277.1H786V276.2H787V277.7H788V278.9H789V278.8H790V279.5H791V285.2H792V279.2H793V278.5H794V277.2H795V279.0H796V275.4H797V274.3H798V278.7H799V278.6H800V278.3H801V278.4H802V275.9H803V276.5H804V274.1H805V277.6H806V275.2H807V276.4H808V277.5H809V275.9H810V273.4H811V273.5H812V277.0H813V277.9H814V280.8H815V278.3H816V274.5H817V276.2H818V277.3H819V280.7H820V277.4H821V277.3H822V276.5H823V276.4H824V276.0H825V277.4H826V278.6H827V278.1H828V277.8H829V277.9H830V276.3H831V278.7H832V277.3H833V277.2H834V276.6H835V276.9H836V275.1H837V278.9H838V277.0H839V274.0H840V277.9H841V272.5H842V275.6H843V279.0H844V278.8H845V277.7H846V276.7H847V275.6H848V278.1H849V278.5H850V278.2H851V284.8H852V277.9H853V278.1H854V278.9H855V276.2H856V279.4H857V279.2H858V278.1H859V276.3H860V279.6H861V276.8H862V274.2H863V275.8H864V277.6H865V275.5H866V278.6H867V277.7H868V275.5H869V284.0H870V276.8H871V276.0H872V275.2H873V277.1H874V278.4H875V278.3H876V281.2H877V277.0H878V278.9H879V277.8H880V278.2H881V274.6H882V278.6H883V277.4H884V278.9H885V278.5H886V278.8H887V282.1H888V279.6H889V279.3H890V278.5H891V275.5H892V283.7H893V278.7H894V274.9H895V278.3H896V275.8H897V277.8H898V277.8H899V277.9H900V278.4H901V276.7H902V279.0H903V278.6H904V276.0H905V279.2H906V278.3H907V278.9H908V278.7H909V277.5H910V278.2H911V277.5H912V280.3H913V278.5H914V274.6H915V278.3H916V277.5H917V278.3H918V271.6H919V273.9H920V277.9H921V276.8H922V277.0H923V275.9H924V276.6H925V278.3H926V278.0H927V276.7H928V275.9H929V277.6H930V282.4H931V278.7H932V279.0H933V277.1H934V278.8H935V280.3H936V278.6H937V279.3H938V277.6H939V277.2H940V278.2H941V275.4H942V277.4H943V278.3H944V275.2H945V276.8H946V274.8H947V276.7H948V278.0H949V274.7H950V276.7H951V275.7H952V283.6H953V274.8H954V274.8H955V277.2H956V278.1H957V282.4H958V277.3H959V277.0H960V277.4H961V278.7H962V275.5H963V277.3H964V276.2H965V278.5H966V277.5H967V278.8H968V277.6H969V278.0H970V279.1H971V273.9H972V274.1H973V276.9H974V276.8H975V277.3H976V277.0H977V277.8H978V277.6H979V278.4H980V276.7H981V276.8H982V278.9H983V277.2H984V279.2H985V278.9H986V278.1H987V278.3H988V278.7H989V277.7H990V278.8H991V280.6H992V278.0H993V275.6H994V276.6H995V275.9H996V277.2H997V275.4H998V277.2H999V277.4H1000V280.8H1001V278.7H1002V275.6H1003V279.1H1004V275.5H1005V278.7H1006V280.0H1007V279.1H1008V278.5H1009V276.5H1010V274.6H1011V285.7H1012V275.2H1013V276.1H1014V285.9H1015V279.0H1016V279.6H1017V278.7H1018V275.9H1019V276.7H1020V277.8H1021V277.5H1022V278.0H1023V278.5H1024V279.2H1025V277.8H1026V276.1H1027V277.0H1028V275.0H1029V277.2H1030V276.1H1031V277.6H1032V276.3H1033V276.3H1034V276.1H1035V275.6H1036V278.7H1037V282.2H1038V279.0H1039V275.6H1040V270.8H1041V278.5H1042V278.5H1043V278.7H1044V278.6H1045V278.2H1046V273.6H1047V277.5H1048V277.8H1049V273.2H1050V278.2H1051V277.8H1052V278.2H1053V275.1H1054V281.5H1055V277.1H1056V275.0H1057V277.6H1058V278.4H1059V279.2H1060V276.5H1061V278.7H1062V277.8H1063V274.2H1064V273.6H1065V280.4H1066V277.9H1067V274.3H1068V277.2H1069V273.2H1070V277.6H1071V278.2H1072V273.9H1073V274.2H1074V277.5H1075V275.9H1076V276.6H1077V284.1H1078V276.8H1079V277.9H1080V278.7H1081V277.7H1082V276.7H1083V276.3H1084V275.0H1085V276.3H1086V279.7H1087V277.1H1088V276.1H1089V278.2H1090V277.3H1091V275.1H1092V277.1H1093V276.9H1094V280.6H1095V278.2H1096V276.4H1097V278.7H1098V274.6H1099V277.2H1100V276.4H1101V277.3H1102V277.2H1103V278.9H1104V276.5H1105V277.8H1106V279.0H1107V277.5H1108V272.4H1109V277.1H1110V275.0H1111V280.6H1112V274.2H1113V274.9H1114V276.7H1115V278.7H1116V277.8H1117V285.8H1118V275.3H1119V276.2H1120V273.6H1121V278.7H1122V275.7H1123V277.4H1124V277.8H1125V281.4H1126V276.2H1127V276.3H1128V279.5H1129V277.2H1130V278.9H1131V277.9H1132V278.4H1133V278.7H1134V279.3H1135V277.0H1136V278.8H1137V277.5H1138V281.5H1139V278.0H1140V276.4H1141V278.7H1142V285.4H1143V278.6H1144V278.3H1145V275.4H1146V278.6H1147V277.6H1148V275.2H1149V274.4H1150V275.0H1151V280.3H1152V276.2H1153V278.5H1154V275.0H1155V278.4H1156V278.9H1157V278.7H1158V277.7H1159V278.4H1160V279.1H1161V277.9H1162V274.4H1163V278.5H1164V282.7H1165V276.6H1166V274.4H1167V278.8H1168V284.2H1169V277.2H1170V278.6H1171V273.5H1172V281.2H1173V277.4H1174V286.4H1175V275.0H1176V277.6H1177V279.1H1178V277.7H1179V277.1H1180V278.8H1181V278.0H1182V276.8H1183V274.8H1184V306.6V335.4H1183V335.1H1182V336.0H1181V336.3H1180V334.2H1179V334.8H1178V333.9H1177V335.6H1176V335.5H1175V332.7H1174V336.1H1173V334.6H1172V328.1H1171V334.1H1170V335.1H1169V333.3H1168V332.8H1167V337.4H1166V335.9H1165V335.1H1164V333.4H1163V337.1H1162V333.2H1161V335.7H1160V334.3H1159V332.9H1158V333.9H1157V332.7H1156V334.2H1155V336.4H1154V333.1H1153V334.8H1152V335.5H1151V333.2H1150V329.4H1149V337.8H1148V336.1H1147V333.1H1146V326.4H1145V332.8H1144V333.7H1143V333.8H1142V333.3H1141V335.5H1140V333.6H1139V334.9H1138V334.9H1137V339.3H1136V333.3H1135V335.0H1134V333.4H1133V336.0H1132V333.0H1131V335.0H1130V333.1H1129V328.1H1128V335.7H1127V334.3H1126V326.5H1125V333.7H1124V334.7H1123V333.5H1122V334.0H1121V333.9H1120V336.7H1119V336.6H1118V334.9H1117V333.7H1116V336.8H1115V335.4H1114V334.5H1113V335.1H1112V333.8H1111V333.1H1110V333.7H1109V333.2H1108V339.0H1107V334.4H1106V330.3H1105V335.7H1104V337.3H1103V334.4H1102V333.6H1101V334.7H1100V330.9H1099V338.3H1098V327.4H1097V334.7H1096V334.1H1095V333.9H1094V333.2H1093V330.2H1092V333.8H1091V327.0H1090V337.3H1089V335.5H1088V334.7H1087V335.1H1086V334.1H1085V333.9H1084V335.5H1083V333.8H1082V334.1H1081V333.7H1080V335.0H1079V334.1H1078V333.4H1077V334.4H1076V334.2H1075V337.4H1074V334.3H1073V334.1H1072V333.4H1071V337.5H1070V327.9H1069V336.2H1068V333.2H1067V338.2H1066V335.9H1065V336.4H1064V334.3H1063V334.2H1062V327.1H1061V335.4H1060V335.5H1059V335.6H1058V335.2H1057V335.7H1056V330.8H1055V333.3H1054V334.5H1053V336.4H1052V333.3H1051V335.9H1050V334.5H1049V335.7H1048V334.8H1047V334.3H1046V333.9H1045V333.5H1044V340.2H1043V333.9H1042V334.4H1041V333.6H1040V332.5H1039V333.2H1038V333.0H1037V335.4H1036V333.2H1035V333.5H1034V333.2H1033V333.5H1032V338.6H1031V335.4H1030V337.2H1029V333.6H1028V334.7H1027V335.1H1026V339.6H1025V340.3H1024V333.8H1023V335.5H1022V335.3H1021V334.4H1020V332.9H1019V332.8H1018V334.5H1017V333.5H1016V334.1H1015V335.3H1014V333.8H1013V330.7H1012V335.0H1011V326.4H1010V336.6H1009V334.8H1008V335.8H1007V335.7H1006V337.7H1005V334.6H1004V332.9H1003V333.1H1002V334.0H1001V333.2H1000V334.2H999V335.8H998V333.5H997V332.5H996V328.9H995V335.6H994V336.6H993V328.0H992V334.6H991V336.4H990V336.5H989V328.9H988V334.2H987V332.9H986V335.7H985V335.1H984V333.4H983V334.4H982V335.0H981V335.5H980V335.4H979V335.9H978V335.1H977V336.8H976V326.8H975V335.0H974V332.6H973V329.1H972V339.5H971V333.4H970V337.3H969V336.6H968V334.0H967V339.2H966V334.9H965V334.3H964V334.7H963V338.0H962V335.1H961V333.1H960V333.2H959V334.7H958V336.7H957V336.1H956V327.3H955V333.7H954V334.0H953V333.5H952V336.1H951V335.1H950V334.3H949V334.6H948V335.4H947V335.0H946V334.1H945V334.1H944V334.4H943V334.3H942V334.2H941V334.5H940V335.8H939V330.3H938V329.0H937V325.5H936V334.1H935V333.4H934V333.2H933V336.3H932V335.4H931V335.1H930V333.9H929V334.9H928V335.5H927V333.6H926V328.8H925V333.8H924V333.3H923V336.5H922V334.4H921V334.0H920V329.1H919V335.8H918V334.7H917V337.3H916V332.5H915V333.8H914V333.8H913V335.5H912V334.2H911V335.5H910V336.8H909V335.6H908V336.8H907V333.6H906V338.1H905V334.0H904V336.3H903V335.2H902V333.8H901V332.7H900V332.4H899V333.4H898V335.1H897V337.7H896V333.5H895V333.0H894V334.1H893V334.5H892V335.7H891V332.1H890V328.8H889V333.9H888V332.2H887V336.1H886V333.9H885V337.8H884V332.7H883V335.0H882V334.6H881V333.0H880V333.3H879V333.1H878V335.2H877V335.4H876V333.0H875V333.3H874V334.0H873V334.3H872V333.4H871V331.8H870V334.8H869V339.6H868V335.6H867V327.5H866V336.0H865V337.1H864V338.9H863V329.3H862V334.8H861V332.9H860V329.8H859V332.0H858V325.1H857V334.2H856V335.3H855V333.5H854V333.1H853V334.7H852V328.5H851V332.8H850V333.3H849V333.4H848V333.4H847V334.9H846V327.1H845V329.6H844V339.4H843V340.1H842V333.8H841V333.3H840V335.5H839V337.1H838V329.3H837V337.4H836V334.8H835V334.8H834V333.7H833V325.5H832V333.5H831V333.0H830V337.8H829V334.8H828V334.6H827V338.9H826V334.8H825V334.5H824V335.0H823V330.1H822V334.7H821V332.8H820V337.9H819V334.8H818V333.2H817V336.3H816V337.9H815V333.9H814V338.6H813V327.2H812V334.4H811V337.1H810V334.0H809V336.9H808V333.9H807V333.7H806V334.0H805V338.9H804V334.1H803V334.0H802V334.2H801V333.8H800V337.0H799V334.0H798V327.7H797V338.3H796V333.3H795V333.2H794V333.6H793V334.6H792V325.2H791V332.7H790V335.0H789V333.2H788V330.8H787V335.0H786V332.7H785V333.5H784V332.4H783V335.5H782V333.3H781V337.4H780V335.9H779V335.6H778V332.7H777V332.1H776V327.5H775V335.4H774V333.0H773V337.3H772V326.3H771V333.4H770V333.1H769V334.3H768V333.0H767V331.0H766V331.7H765V333.3H764V336.6H763V333.1H762V326.8H761V335.2H760V334.4H759V335.2H758V332.8H757V327.0H756V334.3H755V335.7H754V325.8H753V334.6H752V334.6H751V335.6H750V333.6H749V335.8H748V336.3H747V328.8H746V334.7H745V335.8H744V336.6H743V332.9H742V335.2H741V330.8H740V333.3H739V337.4H738V339.1H737V333.0H736V333.1H735V332.9H734V333.6H733V334.3H732V333.0H731V333.3H730V333.8H729V335.0H728V336.1H727V334.6H726V334.6H725V331.0H724V335.7H723V335.1H722V334.5H721V333.9H720V336.7H719V336.6H718V335.0H717V330.0H716V333.2H715V334.6H714V335.2H713V336.3H712V335.0H711V337.6H710V335.9H709V330.4H708V335.8H707V326.8H706V328.4H705V334.3H704V336.7H703V331.3H702V335.1H701V333.6H700V335.3H699V333.4H698V334.6H697V333.9H696V334.1H695V335.5H694V337.9H693V334.9H692V333.7H691V333.5H690V337.5H689V330.8H688V335.4H687V330.7H686V333.7H685V335.8H684V334.4H683V333.0H682V336.9H681V334.4H680V334.4H679V336.1H678V335.1H677V338.5H676V333.8H675V334.4H674V334.7H673V339.6H672V333.1H671V333.1H670V334.5H669V341.5H668V333.7H667V333.6H666V335.1H665V334.6H664V334.3H663V336.5H662V334.8H661V332.9H660V337.2H659V334.4H658V339.0H657V337.2H656V338.0H655V335.5H654V331.4H653V335.0H652V336.2H651V335.0H650V334.7H649V333.5H648V335.6H647V333.5H646V333.3H645V333.7H644V336.5H643V334.6H642V333.7H641V332.9H640V333.3H639V334.5H638V337.9H637V336.5H636V334.2H635V332.1H634V334.5H633V333.3H632V335.4H631V338.3H630V333.6H629V336.1H628V334.5H627V336.6H626V335.7H625V335.6H624V334.8H623V336.0H622V334.3H621V333.7H620V334.6H619V333.6H618V333.9H617V335.5H616V335.0H615V336.3H614V335.3H613V334.4H612V333.7H611V334.7H610V334.0H609V330.3H608V333.4H607V335.4H606V334.9H605V334.9H604V333.2H603V334.1H602V336.0H601V333.9H600V335.0H599V334.5H598V334.8H597V338.4H596V334.0H595V338.0H594V333.6H593V333.4H592V334.6H591V333.2H590V335.2H589V336.6H588V335.3H587V327.9H586V333.2H585V335.5H584V336.1H583V329.0H582V337.6H581V340.2H580V334.4H579V334.1H578V335.2H577V335.2H576V337.7H575V330.2H574V333.2H573V333.5H572V332.8H571V334.2H570V326.8H569V333.6H568V328.4H567V336.6H566V333.4H565V333.6H564V336.0H563V333.7H562V339.8H561V332.9H560V332.2H559V337.3H558V336.4H557V335.2H556V337.1H555V333.5H554V335.7H553V337.9H552V334.7H551V333.2H550V334.0H549V334.3H548V336.5H547V334.0H546V335.3H545V335.8H544V334.0H543V338.5H542V328.8H541V333.9H540V337.1H539V339.6H538V333.7H537V334.0H536V330.1H535V333.6H534V334.4H533V333.1H532V335.8H531V332.6H530V335.5H529V335.1H528V334.6H527V334.7H526V334.1H525V332.8H524V334.4H523V333.7H522V334.7H521V338.6H520V333.4H519V333.3H518V333.7H517V334.4H516V337.5H515V333.4H514V337.7H513V333.0H512V334.3H511V332.9H510V336.9H509V333.0H508V331.5H507V338.0H506V336.1H505V335.4H504V333.2H503V334.6H502V338.2H501V332.8H500V329.5H499V334.5H498V335.5H497V333.5H496V333.3H495V333.9H494V339.6H493V333.2H492V335.8H491V329.3H490V335.3H489V333.7H488V333.6H487V334.8H486V326.8H485V329.6H484V333.6H483V334.9H482V333.2H481V341.9H480V336.4H479V334.3H478V334.1H477V334.3H476V334.6H475V333.5H474V335.4H473V333.3H472V334.6H471V338.4H470V336.6H469V335.4H468V340.8H467V335.0H466V336.2H465V336.0H464V335.0H463V337.1H462V340.4H461V333.6H460V333.1H459V334.0H458V334.2H457V335.1H456V337.7H455V333.7H454V334.1H453V333.4H452V332.6H451V334.9H450V337.4H449V333.1H448V335.5H447V334.6H446V331.9H445V334.3H444V332.6H443V332.4H442V336.5H441V335.6H440V335.6H439V334.1H438V338.7H437V336.3H436V328.3H435V336.1H434V335.5H433V335.3H432V336.7H431V334.9H430V338.8H429V336.2H428V333.4H427V338.0H426V336.6H425V334.1H424V333.4H423V333.2H422V328.5H421V326.6H420V333.0H419V336.7H418V337.0H417V333.6H416V334.2H415V336.5H414V333.7H413V335.7H412V333.0H411V333.0H410V334.4H409V335.3H408V332.8H407V335.6H406V332.6H405V333.6H404V336.4H403V337.8H402V334.3H401V333.1H400V334.0H399V329.3H398V337.1H397V336.6H396V333.2H395V337.4H394V333.7H393V334.4H392V334.6H391V334.7H390V335.0H389V330.7H388V336.5H387V330.8H386V334.8H385V335.0H384V333.6H383V335.9H382V334.2H381V332.7H380V335.3H379V339.5H378V333.0H377V333.9H376V339.4H375V333.2H374V335.1H373V334.9H372V336.5H371V337.2H370V333.1H369V333.3H368V333.1H367V334.3H366V330.5H365V333.1H364V333.3H363V333.0H362V333.6H361V335.2H360V334.0H359V337.6H358V333.8H357V332.8H356V335.4H355V335.2H354V335.3H353V332.9H352V336.2H351V335.5H350V335.3H349V334.8H348V332.4H347V337.2H346V337.1H345V335.9H344V331.9H343V333.1H342V338.0H341V336.6H340V334.9H339V339.6H338V333.5H337V334.2H336V334.0H335V335.6H334V333.4H333V332.6H332V334.7H331V330.2H330V334.3H329V338.3H328V335.3H327V332.4H326V336.1H325V333.1H324V334.4H323V328.0H322V333.7H321V334.3H320V332.6H319V336.1H318V334.2H317V334.2H316V334.2H315V333.6H314V336.2H313V334.6H312V333.3H311V336.9H310V334.5H309V333.9H308V333.0H307V333.4H306V330.6H305V335.1H304V337.4H303V336.6H302V333.2H301V337.2H300V329.7H299V335.7H298V335.9H297V335.7H296V334.0H295V334.7H294V330.7H293V336.0H292V334.2H291V335.2H290V334.2H289V334.2H288V330.9H287V335.7H286V334.8H285V333.8H284V334.5H283V334.1H282V328.1H281V330.9H280V334.6H279V334.2H278V335.0H277V334.4H276V335.4H275V335.0H274V336.5H273V329.5H272V336.7H271V338.0H270V335.2H269V334.9H268V336.6H267V333.9H266V333.6H265V328.2H264V335.5H263V336.8H262V333.7H261V332.8H260V335.5H259V334.0H258V335.1H257V334.8H256V334.9H255V337.6H254V334.3H253V333.2H252V335.4H251V338.3H250V337.9H249V333.0H248V336.1H247V336.3H246V335.4H245V334.3H244V336.6H243V333.9H242V334.5H241V338.8H240V334.3H239V333.8H238V332.9H237V336.0H236V338.2H235V333.7H234V333.9H233V333.4H232V333.9H231V332.9H230V334.1H229V332.1H228V334.4H227V334.6H226V334.9H225V333.9H224V328.2H223V333.5H222V335.7H221V334.5H220V333.0H219V334.2H218V333.8H217V334.0H216V335.3H215V336.0H214V333.9H213V333.4H212V333.1H211V334.1H210V330.7H209V334.3H208V338.0H207V334.9H206V332.7H205V335.7H204V334.2H203V333.3H202V333.9H201V335.1H200V333.3H199V336.5H198V331.2H197V332.9H196V332.9H195V331.9H194V332.9H193V333.3H192V335.3H191V333.2H190V334.0H189V333.2H188V334.5H187V334.7H186V338.8H185V336.5H184V336.3H183V338.0H182V333.2H181V334.7H180V337.6H179V334.6H178V332.7H177V331.4H176V335.9H175V335.6H174V335.2H173V332.6H172V334.8H171V333.5H170V334.5H169V334.7H168V334.4H167V334.6H166V334.4H165V332.8H164V339.4H163V332.8H162V329.2H161V332.9H160V333.8H159V336.5H158V333.2H157V331.9H156V334.7H155V333.4H154V333.6H153V333.5H152V337.7H151V332.8H150V339.9H149V333.0H148V334.2H147V334.4H146V336.0H145V333.8H144V331.7H143V336.1H142V337.1H141V332.5H140V334.9H139V339.3H138V336.1H137V333.0H136V338.0H135V335.3H134Z"/>
<rect x="476.90" y="145.8" width="1.2" height="20" fill="#abc2f1" opacity=".8"/>
<rect x="476.90" y="189.8" width="1.2" height="20" fill="#abc2f1" opacity=".8"/>
<rect x="476.90" y="274.6" width="1.2" height="20" fill="#abc2f1" opacity=".8"/>
<rect x="476.90" y="318.6" width="1.2" height="20" fill="#abc2f1" opacity=".8"/>
<rect x="523.40" y="145.8" width="1.2" height="18" fill="#abc2f1" opacity=".8"/>
<rect x="523.40" y="191.8" width="1.2" height="18" fill="#abc2f1" opacity=".8"/>
<rect x="523.40" y="274.6" width="1.2" height="18" fill="#abc2f1" opacity=".8"/>
<rect x="523.40" y="320.6" width="1.2" height="18" fill="#abc2f1" opacity=".8"/>
<rect x="554.40" y="145.8" width="1.2" height="28" fill="#abc2f1" opacity=".8"/>
<rect x="554.40" y="181.8" width="1.2" height="28" fill="#abc2f1" opacity=".8"/>
<rect x="554.40" y="274.6" width="1.2" height="28" fill="#abc2f1" opacity=".8"/>
<rect x="554.40" y="310.6" width="1.2" height="28" fill="#abc2f1" opacity=".8"/>
<rect x="624.90" y="145.8" width="1.2" height="20" fill="#abc2f1" opacity=".8"/>
<rect x="624.90" y="189.8" width="1.2" height="20" fill="#abc2f1" opacity=".8"/>
<rect x="624.90" y="274.6" width="1.2" height="20" fill="#abc2f1" opacity=".8"/>
<rect x="624.90" y="318.6" width="1.2" height="20" fill="#abc2f1" opacity=".8"/>
<rect x="785.15" y="145.8" width="1.2" height="26" fill="#abc2f1" opacity=".8"/>
<rect x="785.15" y="183.8" width="1.2" height="26" fill="#abc2f1" opacity=".8"/>
<rect x="785.15" y="274.6" width="1.2" height="26" fill="#abc2f1" opacity=".8"/>
<rect x="785.15" y="312.6" width="1.2" height="26" fill="#abc2f1" opacity=".8"/>
<rect x="935.40" y="145.8" width="1.2" height="16" fill="#abc2f1" opacity=".8"/>
<rect x="935.40" y="193.8" width="1.2" height="16" fill="#abc2f1" opacity=".8"/>
<rect x="935.40" y="274.6" width="1.2" height="16" fill="#abc2f1" opacity=".8"/>
<rect x="935.40" y="322.6" width="1.2" height="16" fill="#abc2f1" opacity=".8"/>
<rect x="290.40" y="145.8" width="1.2" height="18" fill="#abc2f1" opacity=".8"/>
<rect x="290.40" y="191.8" width="1.2" height="18" fill="#abc2f1" opacity=".8"/>
<rect x="290.40" y="274.6" width="1.2" height="18" fill="#abc2f1" opacity=".8"/>
<rect x="290.40" y="320.6" width="1.2" height="18" fill="#abc2f1" opacity=".8"/>
<rect x="282.40" y="145.8" width="1.2" height="16" fill="#abc2f1" opacity=".8"/>
<rect x="282.40" y="193.8" width="1.2" height="16" fill="#abc2f1" opacity=".8"/>
<rect x="282.40" y="274.6" width="1.2" height="16" fill="#abc2f1" opacity=".8"/>
<rect x="282.40" y="322.6" width="1.2" height="16" fill="#abc2f1" opacity=".8"/>
<rect x="1114.40" y="145.8" width="1.2" height="16" fill="#abc2f1" opacity=".8"/>
<rect x="1114.40" y="193.8" width="1.2" height="16" fill="#abc2f1" opacity=".8"/>
<rect x="1114.40" y="274.6" width="1.2" height="16" fill="#abc2f1" opacity=".8"/>
<rect x="1114.40" y="322.6" width="1.2" height="16" fill="#abc2f1" opacity=".8"/>
<rect x="318.00" y="145.8" width="1.2" height="24" fill="#abc2f1" opacity=".8"/>
<rect x="318.00" y="185.8" width="1.2" height="24" fill="#abc2f1" opacity=".8"/>
<rect x="318.00" y="274.6" width="1.2" height="24" fill="#abc2f1" opacity=".8"/>
<rect x="318.00" y="314.6" width="1.2" height="24" fill="#abc2f1" opacity=".8"/>
<rect x="322.60" y="145.8" width="1.2" height="16" fill="#abc2f1" opacity=".8"/>
<rect x="322.60" y="193.8" width="1.2" height="16" fill="#abc2f1" opacity=".8"/>
<rect x="322.60" y="274.6" width="1.2" height="16" fill="#abc2f1" opacity=".8"/>
<rect x="322.60" y="322.6" width="1.2" height="16" fill="#abc2f1" opacity=".8"/>
<rect x="329.80" y="145.8" width="1.2" height="18" fill="#abc2f1" opacity=".8"/>
<rect x="329.80" y="191.8" width="1.2" height="18" fill="#abc2f1" opacity=".8"/>
<rect x="329.80" y="274.6" width="1.2" height="18" fill="#abc2f1" opacity=".8"/>
<rect x="329.80" y="320.6" width="1.2" height="18" fill="#abc2f1" opacity=".8"/>
<rect x="405.40" y="145.8" width="1.2" height="22" fill="#abc2f1" opacity=".8"/>
<rect x="405.40" y="187.8" width="1.2" height="22" fill="#abc2f1" opacity=".8"/>
<rect x="405.40" y="274.6" width="1.2" height="22" fill="#abc2f1" opacity=".8"/>
<rect x="405.40" y="316.6" width="1.2" height="22" fill="#abc2f1" opacity=".8"/>
<rect x="408.60" y="145.8" width="1.2" height="15" fill="#abc2f1" opacity=".8"/>
<rect x="408.60" y="194.8" width="1.2" height="15" fill="#abc2f1" opacity=".8"/>
<rect x="408.60" y="274.6" width="1.2" height="15" fill="#abc2f1" opacity=".8"/>
<rect x="408.60" y="323.6" width="1.2" height="15" fill="#abc2f1" opacity=".8"/>
<rect x="1148.20" y="145.8" width="1.2" height="16" fill="#abc2f1" opacity=".8"/>
<rect x="1148.20" y="193.8" width="1.2" height="16" fill="#abc2f1" opacity=".8"/>
<rect x="1148.20" y="274.6" width="1.2" height="16" fill="#abc2f1" opacity=".8"/>
<rect x="1148.20" y="322.6" width="1.2" height="16" fill="#abc2f1" opacity=".8"/>
<rect x="1155.40" y="145.8" width="1.2" height="18" fill="#abc2f1" opacity=".8"/>
<rect x="1155.40" y="191.8" width="1.2" height="18" fill="#abc2f1" opacity=".8"/>
<rect x="1155.40" y="274.6" width="1.2" height="18" fill="#abc2f1" opacity=".8"/>
<rect x="1155.40" y="320.6" width="1.2" height="18" fill="#abc2f1" opacity=".8"/>
<rect x="194.60" y="145.8" width="1.2" height="14" fill="#abc2f1" opacity=".8"/>
<rect x="194.60" y="195.8" width="1.2" height="14" fill="#abc2f1" opacity=".8"/>
<rect x="194.60" y="274.6" width="1.2" height="14" fill="#abc2f1" opacity=".8"/>
<rect x="194.60" y="324.6" width="1.2" height="14" fill="#abc2f1" opacity=".8"/>
<rect x="448.80" y="145.8" width="1.2" height="15" fill="#abc2f1" opacity=".8"/>
<rect x="448.80" y="194.8" width="1.2" height="15" fill="#abc2f1" opacity=".8"/>
<rect x="448.80" y="274.6" width="1.2" height="15" fill="#abc2f1" opacity=".8"/>
<rect x="448.80" y="323.6" width="1.2" height="15" fill="#abc2f1" opacity=".8"/>
<rect x="660.60" y="145.8" width="1.2" height="14" fill="#abc2f1" opacity=".8"/>
<rect x="660.60" y="195.8" width="1.2" height="14" fill="#abc2f1" opacity=".8"/>
<rect x="660.60" y="274.6" width="1.2" height="14" fill="#abc2f1" opacity=".8"/>
<rect x="660.60" y="324.6" width="1.2" height="14" fill="#abc2f1" opacity=".8"/>
<rect x="192.65" y="114" width="1.2" height="257.4" fill="#6464d2" opacity=".72"/>
<rect x="319.90" y="114" width="1.2" height="257.4" fill="#6464d2" opacity=".72"/>
<rect x="326.15" y="114" width="1.2" height="257.4" fill="#6464d2" opacity=".72"/>
<rect x="331.90" y="114" width="1.2" height="257.4" fill="#6464d2" opacity=".72"/>
<rect x="406.90" y="114" width="1.2" height="257.4" fill="#6464d2" opacity=".72"/>
<rect x="446.90" y="114" width="1.2" height="257.4" fill="#6464d2" opacity=".72"/>
<rect x="534.90" y="114" width="1.2" height="257.4" fill="#6464d2" opacity=".72"/>
<rect x="571.90" y="114" width="1.2" height="257.4" fill="#6464d2" opacity=".72"/>
<rect x="658.90" y="114" width="1.2" height="257.4" fill="#6464d2" opacity=".72"/>
<rect x="817.90" y="114" width="1.2" height="257.4" fill="#6464d2" opacity=".72"/>
<rect x="906.90" y="114" width="1.2" height="257.4" fill="#6464d2" opacity=".72"/>
<rect x="945.65" y="114" width="1.2" height="257.4" fill="#6464d2" opacity=".72"/>
<rect x="1006.15" y="114" width="1.2" height="257.4" fill="#6464d2" opacity=".72"/>
<rect x="1041.90" y="114" width="1.2" height="257.4" fill="#6464d2" opacity=".72"/>
<rect x="1150.15" y="114" width="1.2" height="257.4" fill="#6464d2" opacity=".72"/>
<rect x="1153.15" y="114" width="1.2" height="257.4" fill="#6464d2" opacity=".72"/>
<rect x="219.7" y="122" width="1" height="107" fill="#6464d2" opacity=".85"/>
<rect x="219.7" y="250" width="1" height="108" fill="#6464d2" opacity=".85"/>
<rect x="1027.7" y="140" width="1.2" height="85" fill="#6464d2" opacity=".9"/>
<rect x="1027.7" y="267" width="1.2" height="87" fill="#6464d2" opacity=".9"/>
<rect x="134" y="240.7" width="1050" height="1" fill="#15151f"/>
</svg>
<div class="abs" style="left:1188px;top:97px;width:12px;height:578px;background:#f0f0f0;"></div>
<div class="abs" style="left:1188px;top:97px;width:1px;height:579px;background:#fbfbfb;"></div>
<div class="abs" style="left:1189.2px;top:109.4px;width:9.7px;height:552.3px;background:#cdcdcd;"></div>
<div class="abs" style="left:0px;top:675px;width:1200px;height:12px;background:#f0f0f0;"></div>
<div class="abs" style="left:0px;top:675px;width:1189px;height:1px;background:#fbfbfb;"></div>
<div class="abs" style="left:148.5px;top:676.4px;width:328.5px;height:9.2px;background:#cdcdcd;"></div>
<svg class="abs" style="left:0;top:0" width="1200" height="700" viewBox="0 0 1200 700"><path d="M1190.6 105.8l3-3 3 3" fill="none" stroke="#444" stroke-width="1.2"/><path d="M1190.9 667.4l3 3 3-3" fill="none" stroke="#444" stroke-width="1.2"/><path d="M144.6 678l-2.6 2.7 2.6 2.7" fill="none" stroke="#333" stroke-width="1.2"/><path d="M1180.8 678l2.6 2.7-2.6 2.7" fill="none" stroke="#333" stroke-width="1.2"/></svg>
<!-- s_bottom -->
<div class="abs" style="left:0px;top:687px;width:1200px;height:46px;background:#f9f9fa;"></div>
<div class="abs" style="left:0px;top:732.6px;width:1200px;height:1px;background:#e2e2e4;"></div>
<div class="abs" style="left:622px;top:710px;width:578px;height:1px;background:#e6e6e8;"></div>
<div class="abs" style="left:448.3px;top:688px;width:1px;height:44px;background:#e6e6e8;"></div>
<div class="abs" style="left:756px;top:688px;width:1px;height:22px;background:#e6e6e8;"></div>
<div class="abs" style="left:759px;top:688px;width:1px;height:22px;background:#e6e6e8;"></div>
<svg class="abs" style="left:2.2px;top:704.6px" width="6" height="11.8" viewBox="0 0 6 11.8"><rect x="0.2" y="0.2" width="1.6" height="1.6" rx=".4" fill="#a4a8c2"/><rect x="3.5" y="0.2" width="1.6" height="1.6" rx=".4" fill="#a4a8c2"/><rect x="0.2" y="3.8" width="1.6" height="1.6" rx=".4" fill="#a4a8c2"/><rect x="3.5" y="3.8" width="1.6" height="1.6" rx=".4" fill="#a4a8c2"/><rect x="0.2" y="7.4" width="1.6" height="1.6" rx=".4" fill="#a4a8c2"/><rect x="3.5" y="7.4" width="1.6" height="1.6" rx=".4" fill="#a4a8c2"/></svg>
<div class="t" style="left:12.20px;top:694.80px;font-size:9.3px;color:#1c1c1c;transform:scaleX(0.9888);transform-origin:0 0;">Tempó</div>
<div class="t" style="left:59.40px;top:694.80px;font-size:9.3px;color:#1c1c1c;transform:scaleX(0.9436);transform-origin:0 0;">Ütemjelzés</div>
<div class="abs" style="left:12.1px;top:709.2px;width:30.8px;height:16.4px;background:#fff;border:1px solid #b4b4b8;box-sizing:border-box;border-radius:1.5px;"></div>
<div class="abs" style="left:59px;top:709.2px;width:23.6px;height:16.4px;background:#fff;border:1px solid #b4b4b8;box-sizing:border-box;border-radius:1.5px;"></div>
<div class="t" style="left:16.20px;top:711.70px;font-size:9.2px;color:#1c1c1c;transform:scaleX(0.8600);transform-origin:0 0;">96</div>
<div class="t" style="left:63.50px;top:711.70px;font-size:9.2px;color:#1c1c1c;transform:scaleX(0.8209);transform-origin:0 0;">4</div>
<div class="abs" style="left:43.8px;top:709.4px;width:10.2px;height:8px;background:#ececee;border:1px solid #c6c6ca;box-sizing:border-box;border-radius:1px;"></div>
<div class="abs" style="left:43.8px;top:717.6px;width:10.2px;height:8px;background:#ececee;border:1px solid #c6c6ca;box-sizing:border-box;border-radius:1px;"></div>
<div class="abs" style="left:83.8px;top:709.4px;width:10.2px;height:8px;background:#ececee;border:1px solid #c6c6ca;box-sizing:border-box;border-radius:1px;"></div>
<div class="abs" style="left:83.8px;top:717.6px;width:10.2px;height:8px;background:#ececee;border:1px solid #c6c6ca;box-sizing:border-box;border-radius:1px;"></div>
<svg class="abs" style="left:0px;top:700px" width="160" height="30" viewBox="0 0 160 30"><path d="M47 14.9l1.9-2.2 1.9 2.2zM47 20.4l1.9 2.2 1.9-2.2z" fill="#222"/><path d="M87 14.9l1.9-2.2 1.9 2.2zM87 20.4l1.9 2.2 1.9-2.2z" fill="#222"/><path d="M98.3 21.2l3.4-9.2" stroke="#333" stroke-width=".9"/><path d="M132.6 15.6l2.5 2.8 2.5-2.8" fill="none" stroke="#333" stroke-width="1.1"/></svg>
<div class="abs" style="left:105.6px;top:709.2px;width:35.8px;height:16.4px;background:#e6e6e8;border:1px solid #b4b4b8;box-sizing:border-box;border-radius:1.5px;"></div>
<div class="t" style="left:109.00px;top:711.70px;font-size:9.2px;color:#1c1c1c;transform:scaleX(0.7819);transform-origin:0 0;">16</div>
<svg class="abs" style="left:0px;top:700px" width="160" height="30" viewBox="0 0 160 30"><path d="M132.6 15.6l2.5 2.8 2.5-2.8" fill="none" stroke="#333" stroke-width="1.1"/></svg>
<svg class="abs" style="left:151.6px;top:704.8px" width="6" height="11.8" viewBox="0 0 6 11.8"><rect x="0.2" y="0.2" width="1.6" height="1.6" rx=".4" fill="#a4a8c2"/><rect x="3.5" y="0.2" width="1.6" height="1.6" rx=".4" fill="#a4a8c2"/><rect x="0.2" y="3.8" width="1.6" height="1.6" rx=".4" fill="#a4a8c2"/><rect x="3.5" y="3.8" width="1.6" height="1.6" rx=".4" fill="#a4a8c2"/><rect x="0.2" y="7.4" width="1.6" height="1.6" rx=".4" fill="#a4a8c2"/><rect x="3.5" y="7.4" width="1.6" height="1.6" rx=".4" fill="#a4a8c2"/></svg>
<div class="abs" style="left:161px;top:695px;width:8.4px;height:8.4px;background:#fff;border:1px solid #222;box-sizing:border-box;"></div>
<svg class="abs" style="left:160px;top:694px" width="12" height="12" viewBox="0 0 12 12"><path d="M2.6 5.4l1.8 1.9 3.4-4" fill="none" stroke="#111" stroke-width="1.2"/></svg>
<div class="t" style="left:171.60px;top:694.20px;font-size:9.3px;color:#1c1c1c;transform:scaleX(0.9410);transform-origin:0 0;">Csattanás</div>
<div class="abs" style="left:161px;top:710px;width:106.4px;height:15.2px;background:#fff;border:1px solid #b4b4b8;box-sizing:border-box;border-radius:1.5px;"></div>
<div class="t" style="left:164.00px;top:712.20px;font-size:9.2px;color:#1c1c1c;transform:scaleX(0.9246);transform-origin:0 0;">1/128 (triolák)</div>
<svg class="abs" style="left:250px;top:700px" width="20" height="30" viewBox="0 0 20 30"><path d="M9.2 16.4l2.5 2.8 2.5-2.8" fill="none" stroke="#333" stroke-width="1.1"/></svg>
<svg class="abs" style="left:274px;top:704.8px" width="6" height="11.8" viewBox="0 0 6 11.8"><rect x="0.2" y="0.2" width="1.6" height="1.6" rx=".4" fill="#a4a8c2"/><rect x="3.5" y="0.2" width="1.6" height="1.6" rx=".4" fill="#a4a8c2"/><rect x="0.2" y="3.8" width="1.6" height="1.6" rx=".4" fill="#a4a8c2"/><rect x="3.5" y="3.8" width="1.6" height="1.6" rx=".4" fill="#a4a8c2"/><rect x="0.2" y="7.4" width="1.6" height="1.6" rx=".4" fill="#a4a8c2"/><rect x="3.5" y="7.4" width="1.6" height="1.6" rx=".4" fill="#a4a8c2"/></svg>
<div class="abs" style="left:281.4px;top:699.8px;width:159px;height:21.2px;background:#c6c8d4;border-radius:1.5px;"></div>
<div class="abs" style="left:283px;top:701px;width:155.8px;height:18.6px;background:#2b2d42;"></div>
<div class="t" style="left:284.6px;top:702.9px;font-size:15.8px;color:#fff;letter-spacing:1.25px;-webkit-text-stroke:0;">00</div>
<div class="t" style="left:307.2px;top:702.9px;font-size:15.8px;color:#fff;letter-spacing:1.25px;-webkit-text-stroke:0;">h</div>
<div class="t" style="left:320.8px;top:702.9px;font-size:15.8px;color:#fff;letter-spacing:1.25px;-webkit-text-stroke:0;">00</div>
<div class="t" style="left:343.6px;top:702.9px;font-size:15.8px;color:#fff;letter-spacing:1.25px;-webkit-text-stroke:0;">m</div>
<div class="t" style="left:360.8px;top:702.9px;font-size:15.8px;color:#fff;letter-spacing:1.1px;-webkit-text-stroke:0;">00.000</div>
<div class="t" style="left:419.4px;top:702.9px;font-size:15.8px;color:#fff;letter-spacing:1.25px;-webkit-text-stroke:0;">s</div>
<svg class="abs" style="left:428px;top:700px" width="12" height="20" viewBox="0 0 12 20"><path d="M3.4 8.2h6.4l-3.2 3.6z" fill="#fff"/></svg>
<svg class="abs" style="left:453.6px;top:704.8px" width="6" height="11.8" viewBox="0 0 6 11.8"><rect x="0.2" y="0.2" width="1.6" height="1.6" rx=".4" fill="#a4a8c2"/><rect x="3.5" y="0.2" width="1.6" height="1.6" rx=".4" fill="#a4a8c2"/><rect x="0.2" y="3.8" width="1.6" height="1.6" rx=".4" fill="#a4a8c2"/><rect x="3.5" y="3.8" width="1.6" height="1.6" rx=".4" fill="#a4a8c2"/><rect x="0.2" y="7.4" width="1.6" height="1.6" rx=".4" fill="#a4a8c2"/><rect x="3.5" y="7.4" width="1.6" height="1.6" rx=".4" fill="#a4a8c2"/></svg>
<div class="t" style="left:462.50px;top:691.40px;font-size:9.3px;color:#1c1c1c;transform:scaleX(0.9875);transform-origin:0 0;">Kijelölés</div>
<div class="abs" style="left:480.8px;top:708.6px;width:16px;height:15.6px;background:#dedee3;border-radius:2px;"></div>
<svg class="abs" style="left:0px;top:0px" width="520" height="740" viewBox="0 0 520 740"><path d="M487.61 713.15L487.94 711.90L489.86 711.90L490.19 713.15L491.07 713.66L492.32 713.32L493.27 714.98L492.36 715.89L492.36 716.91L493.27 717.82L492.32 719.48L491.07 719.14L490.19 719.65L489.86 720.90L487.94 720.90L487.61 719.65L486.73 719.14L485.48 719.48L484.53 717.82L485.44 716.91L485.44 715.89L484.53 714.98L485.48 713.32L486.73 713.66Z" fill="none" stroke="#222" stroke-width="0.95" stroke-linejoin="round"/><circle cx="488.9" cy="716.4" r="1.4" fill="none" stroke="#222" stroke-width="0.95"/></svg>
<div class="abs" style="left:501.6px;top:691.8px;width:116.6px;height:15.2px;background:#c6c8d4;border-radius:1.5px;"></div>
<div class="abs" style="left:503px;top:693.4px;width:113.8px;height:12.2px;background:#2b2d42;"></div>
<div class="t" style="left:504.4px;top:694.0px;font-size:9.6px;color:#e4e9ff;-webkit-text-stroke:0;letter-spacing:3.3px;">00</div>
<div class="t" style="left:522px;top:694.0px;font-size:9.6px;color:#e4e9ff;-webkit-text-stroke:0;">h</div>
<div class="t" style="left:530.6px;top:694.0px;font-size:9.6px;color:#e4e9ff;-webkit-text-stroke:0;letter-spacing:3.3px;">00</div>
<div class="t" style="left:546.8px;top:694.0px;font-size:9.6px;color:#e4e9ff;-webkit-text-stroke:0;">m</div>
<div class="t" style="left:558px;top:694.0px;font-size:9.6px;color:#e4e9ff;-webkit-text-stroke:0;letter-spacing:2.2px;">00.000</div>
<div class="t" style="left:600.2px;top:694.0px;font-size:9.6px;color:#e4e9ff;-webkit-text-stroke:0;">s</div>
<svg class="abs" style="left:606px;top:691.8px" width="12" height="16" viewBox="0 0 12 16"><path d="M3.6 5.8h5.8l-2.9 3.4z" fill="#fff"/></svg>
<div class="abs" style="left:501.6px;top:708.8px;width:116.6px;height:15.2px;background:#c6c8d4;border-radius:1.5px;"></div>
<div class="abs" style="left:503px;top:710.4px;width:113.8px;height:12.2px;background:#2b2d42;"></div>
<div class="t" style="left:504.4px;top:711.0px;font-size:9.6px;color:#e4e9ff;-webkit-text-stroke:0;letter-spacing:3.3px;">02</div>
<div class="t" style="left:522px;top:711.0px;font-size:9.6px;color:#e4e9ff;-webkit-text-stroke:0;">h</div>
<div class="t" style="left:530.6px;top:711.0px;font-size:9.6px;color:#e4e9ff;-webkit-text-stroke:0;letter-spacing:3.3px;">59</div>
<div class="t" style="left:546.8px;top:711.0px;font-size:9.6px;color:#e4e9ff;-webkit-text-stroke:0;">m</div>
<div class="t" style="left:558px;top:711.0px;font-size:9.6px;color:#e4e9ff;-webkit-text-stroke:0;letter-spacing:2.2px;">05.000</div>
<div class="t" style="left:600.2px;top:711.0px;font-size:9.6px;color:#e4e9ff;-webkit-text-stroke:0;">s</div>
<svg class="abs" style="left:606px;top:708.8px" width="12" height="16" viewBox="0 0 12 16"><path d="M3.6 5.8h5.8l-2.9 3.4z" fill="#fff"/></svg>
<svg class="abs" style="left:624px;top:693.6px" width="6" height="11.8" viewBox="0 0 6 11.8"><rect x="0.2" y="0.2" width="1.6" height="1.6" rx=".4" fill="#a4a8c2"/><rect x="3.5" y="0.2" width="1.6" height="1.6" rx=".4" fill="#a4a8c2"/><rect x="0.2" y="3.8" width="1.6" height="1.6" rx=".4" fill="#a4a8c2"/><rect x="3.5" y="3.8" width="1.6" height="1.6" rx=".4" fill="#a4a8c2"/><rect x="0.2" y="7.4" width="1.6" height="1.6" rx=".4" fill="#a4a8c2"/><rect x="3.5" y="7.4" width="1.6" height="1.6" rx=".4" fill="#a4a8c2"/></svg>
<div class="abs" style="left:631.3px;top:689.2px;width:18.4px;height:18.4px;background:#dedee3;border-radius:2px;"></div>
<svg class="abs" style="left:0px;top:0px" width="800" height="740" viewBox="0 0 800 740"><path d="M635.6 693.4L645 698.3L635.6 703.2Z" fill="#43896a"/><rect x="653.8" y="700.7" width="98" height="1.2" fill="#b7c7e0"/><rect x="654.0" y="698.8" width=".8" height="2" fill="#c3d0e6"/><rect x="658.6" y="698.8" width=".8" height="2" fill="#c3d0e6"/><rect x="663.3" y="698.8" width=".8" height="2" fill="#c3d0e6"/><rect x="667.9" y="698.8" width=".8" height="2" fill="#c3d0e6"/><rect x="672.6" y="698.8" width=".8" height="2" fill="#c3d0e6"/><rect x="677.2" y="698.8" width=".8" height="2" fill="#c3d0e6"/><rect x="681.8" y="698.8" width=".8" height="2" fill="#c3d0e6"/><rect x="686.5" y="698.8" width=".8" height="2" fill="#c3d0e6"/><rect x="691.1" y="698.8" width=".8" height="2" fill="#c3d0e6"/><rect x="695.8" y="698.8" width=".8" height="2" fill="#c3d0e6"/><rect x="700.4" y="698.8" width=".8" height="2" fill="#c3d0e6"/><rect x="705.0" y="698.8" width=".8" height="2" fill="#c3d0e6"/><rect x="709.7" y="698.8" width=".8" height="2" fill="#c3d0e6"/><rect x="714.3" y="698.8" width=".8" height="2" fill="#c3d0e6"/><rect x="719.0" y="698.8" width=".8" height="2" fill="#c3d0e6"/><rect x="723.6" y="698.8" width=".8" height="2" fill="#c3d0e6"/><rect x="728.2" y="698.8" width=".8" height="2" fill="#c3d0e6"/><rect x="732.9" y="698.8" width=".8" height="2" fill="#c3d0e6"/><rect x="737.5" y="698.8" width=".8" height="2" fill="#c3d0e6"/><rect x="742.2" y="698.8" width=".8" height="2" fill="#c3d0e6"/><rect x="746.8" y="698.8" width=".8" height="2" fill="#c3d0e6"/><rect x="751.4" y="698.8" width=".8" height="2" fill="#c3d0e6"/><circle cx="686.2" cy="701.3" r="4" fill="#fff" stroke="#222" stroke-width=".9"/><rect x="653.8" y="693.7" width="3.2" height="1.2" fill="#000"/><path d="M746.2 694.4h3.8M748.1 692.5v3.8" stroke="#000" stroke-width="1.2"/></svg>
<div class="abs" style="left:0px;top:733.4px;width:1200px;height:15px;background:#f0f0f0;"></div>
<div class="abs" style="left:6.2px;top:734px;width:1px;height:14px;background:#dcdcdc;"></div>
<div class="abs" style="left:168.3px;top:734px;width:1px;height:14px;background:#dcdcdc;"></div>
<div class="abs" style="left:1072.3px;top:734px;width:1px;height:14px;background:#dcdcdc;"></div>
<div class="t" style="left:10.00px;top:737.60px;font-size:9.2px;color:#111;transform:scaleX(0.8854);transform-origin:0 0;">Leállítva.</div>
<div class="abs" style="left:0px;top:748px;width:1200px;height:1.5px;background:#7a9ccb;"></div>
</body>
</html>
